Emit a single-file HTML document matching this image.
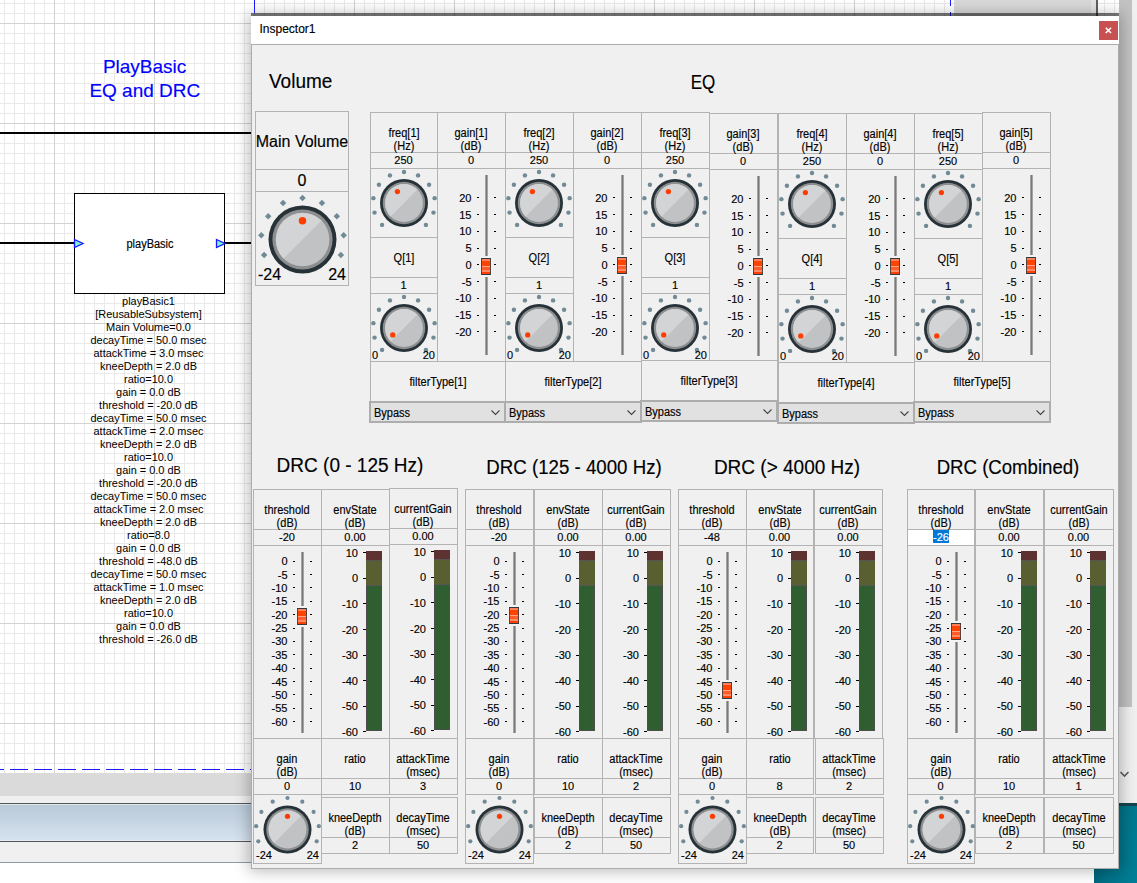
<!DOCTYPE html><html><head><meta charset="utf-8"><style>
html,body{margin:0;padding:0;width:1137px;height:883px;overflow:hidden;background:#fff;}
body{position:relative;font-family:"Liberation Sans", sans-serif;}
.a{position:absolute;}
.t{white-space:pre;-webkit-text-stroke:0.15px currentColor;}
</style></head><body>
<div class="a" style="left:0;top:0;width:1137px;height:773px;background:linear-gradient(to right,#d2d2d2 1px,transparent 1px) 54px 0/100px 100px,linear-gradient(to bottom,#d2d2d2 1px,transparent 1px) 0 23px/100px 100px,linear-gradient(to right,#e9e9e9 1px,transparent 1px) 4px 0/10px 10px,linear-gradient(to bottom,#e9e9e9 1px,transparent 1px) 0 3px/10px 10px,#fff;"></div>
<div class="a t" style="left:-5.40px;width:300px;text-align:center;top:52.42px;line-height:30px;font-size:19px;color:#0000ff;">PlayBasic</div>
<div class="a t" style="left:-5.20px;width:300px;text-align:center;top:75.72px;line-height:30px;font-size:19px;color:#0000ff;">EQ and DRC</div>
<div class="a" style="left:0px;top:132px;width:251px;height:2px;background:#000;"></div>
<div class="a" style="left:0px;top:242px;width:74px;height:2px;background:#000;"></div>
<div class="a" style="left:225px;top:242px;width:26px;height:2px;background:#000;"></div>
<div class="a" style="left:74px;top:193px;width:151px;height:101px;background:#fff;border:1px solid #000;box-sizing:border-box;"></div>
<div class="a t" style="left:49.50px;top:237.20px;width:200px;line-height:14px;font-size:12px;text-align:center;color:#000;transform:scaleX(0.917);transform-origin:50% 0;">playBasic</div>
<svg class="a" style="left:73px;top:237px" width="14" height="13"><path d="M1.5 2.5L10 6.5L1.5 10.5Z" fill="#7ff0d8" stroke="#1414ff" stroke-width="1.3"/></svg>
<svg class="a" style="left:215px;top:237px" width="14" height="13"><path d="M1.5 2.5L10 6.5L1.5 10.5Z" fill="#7ff0d8" stroke="#1414ff" stroke-width="1.3"/></svg>
<div class="a t" style="left:48.50px;top:294.40px;width:200px;line-height:14px;font-size:10.95px;text-align:center;color:#000;-webkit-text-stroke:0;">playBasic1</div>
<div class="a t" style="left:48.50px;top:307.40px;width:200px;line-height:14px;font-size:10.95px;text-align:center;color:#000;-webkit-text-stroke:0;">[ReusableSubsystem]</div>
<div class="a t" style="left:48.50px;top:320.40px;width:200px;line-height:14px;font-size:10.95px;text-align:center;color:#000;-webkit-text-stroke:0;">Main Volume=0.0</div>
<div class="a t" style="left:48.50px;top:333.40px;width:200px;line-height:14px;font-size:10.95px;text-align:center;color:#000;-webkit-text-stroke:0;">decayTime = 50.0 msec</div>
<div class="a t" style="left:48.50px;top:346.40px;width:200px;line-height:14px;font-size:10.95px;text-align:center;color:#000;-webkit-text-stroke:0;">attackTime = 3.0 msec</div>
<div class="a t" style="left:48.50px;top:359.40px;width:200px;line-height:14px;font-size:10.95px;text-align:center;color:#000;-webkit-text-stroke:0;">kneeDepth = 2.0 dB</div>
<div class="a t" style="left:48.50px;top:372.40px;width:200px;line-height:14px;font-size:10.95px;text-align:center;color:#000;-webkit-text-stroke:0;">ratio=10.0</div>
<div class="a t" style="left:48.50px;top:385.40px;width:200px;line-height:14px;font-size:10.95px;text-align:center;color:#000;-webkit-text-stroke:0;">gain = 0.0 dB</div>
<div class="a t" style="left:48.50px;top:398.40px;width:200px;line-height:14px;font-size:10.95px;text-align:center;color:#000;-webkit-text-stroke:0;">threshold = -20.0 dB</div>
<div class="a t" style="left:48.50px;top:411.40px;width:200px;line-height:14px;font-size:10.95px;text-align:center;color:#000;-webkit-text-stroke:0;">decayTime = 50.0 msec</div>
<div class="a t" style="left:48.50px;top:424.40px;width:200px;line-height:14px;font-size:10.95px;text-align:center;color:#000;-webkit-text-stroke:0;">attackTime = 2.0 msec</div>
<div class="a t" style="left:48.50px;top:437.40px;width:200px;line-height:14px;font-size:10.95px;text-align:center;color:#000;-webkit-text-stroke:0;">kneeDepth = 2.0 dB</div>
<div class="a t" style="left:48.50px;top:450.40px;width:200px;line-height:14px;font-size:10.95px;text-align:center;color:#000;-webkit-text-stroke:0;">ratio=10.0</div>
<div class="a t" style="left:48.50px;top:463.40px;width:200px;line-height:14px;font-size:10.95px;text-align:center;color:#000;-webkit-text-stroke:0;">gain = 0.0 dB</div>
<div class="a t" style="left:48.50px;top:476.40px;width:200px;line-height:14px;font-size:10.95px;text-align:center;color:#000;-webkit-text-stroke:0;">threshold = -20.0 dB</div>
<div class="a t" style="left:48.50px;top:489.40px;width:200px;line-height:14px;font-size:10.95px;text-align:center;color:#000;-webkit-text-stroke:0;">decayTime = 50.0 msec</div>
<div class="a t" style="left:48.50px;top:502.40px;width:200px;line-height:14px;font-size:10.95px;text-align:center;color:#000;-webkit-text-stroke:0;">attackTime = 2.0 msec</div>
<div class="a t" style="left:48.50px;top:515.40px;width:200px;line-height:14px;font-size:10.95px;text-align:center;color:#000;-webkit-text-stroke:0;">kneeDepth = 2.0 dB</div>
<div class="a t" style="left:48.50px;top:528.40px;width:200px;line-height:14px;font-size:10.95px;text-align:center;color:#000;-webkit-text-stroke:0;">ratio=8.0</div>
<div class="a t" style="left:48.50px;top:541.40px;width:200px;line-height:14px;font-size:10.95px;text-align:center;color:#000;-webkit-text-stroke:0;">gain = 0.0 dB</div>
<div class="a t" style="left:48.50px;top:554.40px;width:200px;line-height:14px;font-size:10.95px;text-align:center;color:#000;-webkit-text-stroke:0;">threshold = -48.0 dB</div>
<div class="a t" style="left:48.50px;top:567.40px;width:200px;line-height:14px;font-size:10.95px;text-align:center;color:#000;-webkit-text-stroke:0;">decayTime = 50.0 msec</div>
<div class="a t" style="left:48.50px;top:580.40px;width:200px;line-height:14px;font-size:10.95px;text-align:center;color:#000;-webkit-text-stroke:0;">attackTime = 1.0 msec</div>
<div class="a t" style="left:48.50px;top:593.40px;width:200px;line-height:14px;font-size:10.95px;text-align:center;color:#000;-webkit-text-stroke:0;">kneeDepth = 2.0 dB</div>
<div class="a t" style="left:48.50px;top:606.40px;width:200px;line-height:14px;font-size:10.95px;text-align:center;color:#000;-webkit-text-stroke:0;">ratio=10.0</div>
<div class="a t" style="left:48.50px;top:619.40px;width:200px;line-height:14px;font-size:10.95px;text-align:center;color:#000;-webkit-text-stroke:0;">gain = 0.0 dB</div>
<div class="a t" style="left:48.50px;top:632.40px;width:200px;line-height:14px;font-size:10.95px;text-align:center;color:#000;-webkit-text-stroke:0;">threshold = -26.0 dB</div>
<div class="a" style="left:0;top:769px;width:1137px;height:1px;background:repeating-linear-gradient(to right,transparent 0 10px,#1a1aff 10px 28px,transparent 28px 34px);background:linear-gradient(to right,#1a1aff 18px,transparent 18px) 10px 0/24px 1px;"></div>
<div class="a" style="left:0px;top:773px;width:1137px;height:23px;background:#dadada;"></div>
<div class="a" style="left:0px;top:796px;width:1137px;height:7px;background:#f0f0f0;"></div>
<div class="a" style="left:0px;top:803px;width:1137px;height:1px;background:#555;"></div>
<div class="a" style="left:0px;top:804px;width:1137px;height:1px;background:#dfe7ef;"></div>
<div class="a" style="left:0px;top:805px;width:1137px;height:35px;background:linear-gradient(#b9c9d8,#d6e2ef);"></div>
<div class="a" style="left:0px;top:840px;width:1137px;height:1px;background:#e4ebf3;"></div>
<div class="a" style="left:0px;top:841px;width:1137px;height:1px;background:#555;"></div>
<div class="a" style="left:0px;top:842px;width:1137px;height:20px;background:#f0f0f0;"></div>
<div class="a" style="left:0px;top:862px;width:1137px;height:1px;background:#8f99a3;"></div>
<div class="a" style="left:954px;top:0px;width:137px;height:16px;background:#d9d9d9;"></div>
<div class="a" style="left:1091px;top:0px;width:5px;height:16px;background:#e4e4e4;"></div>
<div class="a" style="left:1096px;top:0px;width:2px;height:16px;background:#606060;"></div>
<div class="a" style="left:254px;top:0px;width:1px;height:13px;background:#1a1aff;z-index:5;"></div>
<div class="a" style="left:950px;top:0;width:1px;height:16px;background:linear-gradient(#1a1aff 6px,transparent 6px) 0 0/1px 12px;"></div>
<div class="a" style="left:1119px;top:0px;width:18px;height:803px;background:#f0f0f0;"></div>
<div class="a" style="left:1119px;top:0px;width:13px;height:707px;background:#c2c2c2;"></div>
<svg class="a" style="left:1119px;top:770px" width="12" height="10"><path d="M1.5 2L5.5 6L9.5 2" fill="none" stroke="#5a5a5a" stroke-width="1.6"/></svg>
<div class="a" style="left:1094px;top:803px;width:43px;height:80px;background:linear-gradient(100deg,#005a6c,#007389 50%,#007f97);"></div>
<div class="a" style="left:1094px;top:803px;width:43px;height:3px;background:#17434e;"></div>
<div class="a" style="left:251px;top:16px;width:868px;height:853px;background:#f0f0f0;box-shadow:0 0 14px 2px rgba(0,0,0,0.28);"></div>
<div class="a" style="left:251px;top:13px;width:868px;height:3px;background:rgba(0,0,0,0.5);"></div>
<div class="a" style="left:251px;top:16px;width:868px;height:28px;background:#fff;"></div>
<div class="a" style="left:251px;top:44px;width:868px;height:1px;background:#acacac;"></div>
<div class="a" style="left:251px;top:45px;width:1px;height:824px;background:#acacac;"></div>
<div class="a" style="left:1118px;top:45px;width:1px;height:824px;background:#acacac;"></div>
<div class="a" style="left:251px;top:868px;width:868px;height:1px;background:#acacac;"></div>
<div class="a t" style="left:259.50px;top:22.00px;width:200px;line-height:14px;font-size:12px;text-align:left;color:#000;">Inspector1</div>
<div class="a" style="left:1099px;top:21px;width:19px;height:19px;background:#c75050;"></div>
<svg class="a" style="left:1099px;top:21px" width="19" height="19"><path d="M6.8 6.8L12 12M12 6.8L6.8 12" stroke="#fff" stroke-width="1.6"/></svg>
<div class="a t" style="left:269px;top:66.07px;line-height:30px;font-size:20px;transform:scaleX(0.95);transform-origin:0 0;">Volume</div>
<div class="a t" style="left:502.50px;width:400px;text-align:center;top:66.57px;line-height:30px;font-size:20px;transform:scaleX(0.85);transform-origin:50% 0;">EQ</div>
<div class="a" style="left:255px;top:111px;width:94px;height:59px;border:1px solid #b3b3b3;box-sizing:border-box;"></div>
<div class="a" style="left:255px;top:169px;width:94px;height:23px;border:1px solid #b3b3b3;box-sizing:border-box;"></div>
<div class="a" style="left:255px;top:191px;width:94px;height:95px;border:1px solid #b3b3b3;box-sizing:border-box;"></div>
<div class="a t" style="left:242.00px;top:134.60px;width:120px;line-height:14px;font-size:16px;text-align:center;color:#000;">Main Volume</div>
<div class="a t" style="left:272.00px;top:174.00px;width:60px;line-height:14px;font-size:16px;text-align:center;color:#000;">0</div>
<svg class="a" style="left:252.80px;top:189.80px" width="99" height="99" viewBox="0 0 99 99"><path d="M11.11 61.76L14.36 65.01L11.11 68.26L7.86 65.01Z" fill="#708a96"/><path d="M8.33 41.92L11.58 45.17L8.33 48.42L5.08 45.17Z" fill="#708a96"/><path d="M15.18 23.10L18.43 26.35L15.18 29.60L11.93 26.35Z" fill="#708a96"/><path d="M30.06 9.70L33.31 12.95L30.06 16.20L26.81 12.95Z" fill="#708a96"/><path d="M49.50 4.85L52.75 8.10L49.50 11.35L46.25 8.10Z" fill="#708a96"/><path d="M68.94 9.70L72.19 12.95L68.94 16.20L65.69 12.95Z" fill="#708a96"/><path d="M83.82 23.10L87.07 26.35L83.82 29.60L80.57 26.35Z" fill="#708a96"/><path d="M90.67 41.92L93.92 45.17L90.67 48.42L87.42 45.17Z" fill="#708a96"/><path d="M87.89 61.76L91.14 65.01L87.89 68.26L84.64 65.01Z" fill="#708a96"/><circle cx="49.5" cy="49.5" r="34" fill="#263238"/><circle cx="49.5" cy="49.5" r="30.09" fill="#8d8e8f"/><circle cx="49.5" cy="49.5" r="26.86" fill="#c1c2c3"/><path d="M30.51 68.49A26.86 26.86 0 0 1 68.49 30.51Z" fill="#d3d4d6"/><circle cx="49.50" cy="30.80" r="3.74" fill="#ff3c00"/></svg>
<div class="a t" style="left:258.00px;top:267.70px;width:60px;line-height:14px;font-size:16px;text-align:left;color:#000;">-24</div>
<div class="a t" style="left:286.00px;top:267.70px;width:60px;line-height:14px;font-size:16px;text-align:right;color:#000;">24</div>
<div class="a" style="left:370px;top:112px;width:68px;height:41px;border:1px solid #b3b3b3;box-sizing:border-box;"></div>
<div class="a" style="left:370px;top:152px;width:68px;height:17px;border:1px solid #b3b3b3;box-sizing:border-box;"></div>
<div class="a" style="left:370px;top:168px;width:68px;height:70px;border:1px solid #b3b3b3;box-sizing:border-box;"></div>
<div class="a t" style="left:303.50px;top:125.70px;width:200px;line-height:14px;font-size:12px;text-align:center;color:#000;transform:scaleX(0.917);transform-origin:50% 0;">freq[1]</div>
<div class="a t" style="left:303.50px;top:138.70px;width:200px;line-height:14px;font-size:12px;text-align:center;color:#000;transform:scaleX(0.917);transform-origin:50% 0;">(Hz)</div>
<div class="a t" style="left:303.50px;top:153.00px;width:200px;line-height:14px;font-size:11px;text-align:center;color:#000;">250</div>
<svg class="a" style="left:367.40px;top:166.20px" width="74" height="74" viewBox="0 0 74 74"><circle cx="15.08" cy="58.92" r="2.20" fill="#708a96"/><circle cx="7.52" cy="46.58" r="2.20" fill="#708a96"/><circle cx="6.38" cy="32.15" r="2.20" fill="#708a96"/><circle cx="11.92" cy="18.78" r="2.20" fill="#708a96"/><circle cx="22.93" cy="9.38" r="2.20" fill="#708a96"/><circle cx="37.00" cy="6.00" r="2.20" fill="#708a96"/><circle cx="51.07" cy="9.38" r="2.20" fill="#708a96"/><circle cx="62.08" cy="18.78" r="2.20" fill="#708a96"/><circle cx="67.62" cy="32.15" r="2.20" fill="#708a96"/><circle cx="66.48" cy="46.58" r="2.20" fill="#708a96"/><circle cx="58.92" cy="58.92" r="2.20" fill="#708a96"/><circle cx="37.0" cy="37.0" r="24" fill="#263238"/><circle cx="37.0" cy="37.0" r="21.24" fill="#8d8e8f"/><circle cx="37.0" cy="37.0" r="18.96" fill="#c1c2c3"/><path d="M23.59 50.41A18.96 18.96 0 0 1 50.41 23.59Z" fill="#d3d4d6"/><circle cx="30.40" cy="25.57" r="2.64" fill="#ff3c00"/></svg>
<div class="a" style="left:370px;top:237px;width:68px;height:41px;border:1px solid #b3b3b3;box-sizing:border-box;"></div>
<div class="a" style="left:370px;top:277px;width:68px;height:17px;border:1px solid #b3b3b3;box-sizing:border-box;"></div>
<div class="a" style="left:370px;top:293px;width:68px;height:69px;border:1px solid #b3b3b3;box-sizing:border-box;"></div>
<div class="a t" style="left:303.50px;top:250.70px;width:200px;line-height:14px;font-size:12px;text-align:center;color:#000;transform:scaleX(0.917);transform-origin:50% 0;">Q[1]</div>
<div class="a t" style="left:303.50px;top:278.00px;width:200px;line-height:14px;font-size:11px;text-align:center;color:#000;">1</div>
<svg class="a" style="left:367.20px;top:291.00px" width="74" height="74" viewBox="0 0 74 74"><circle cx="15.08" cy="58.92" r="2.20" fill="#708a96"/><circle cx="7.52" cy="46.58" r="2.20" fill="#708a96"/><circle cx="6.38" cy="32.15" r="2.20" fill="#708a96"/><circle cx="11.92" cy="18.78" r="2.20" fill="#708a96"/><circle cx="22.93" cy="9.38" r="2.20" fill="#708a96"/><circle cx="37.00" cy="6.00" r="2.20" fill="#708a96"/><circle cx="51.07" cy="9.38" r="2.20" fill="#708a96"/><circle cx="62.08" cy="18.78" r="2.20" fill="#708a96"/><circle cx="67.62" cy="32.15" r="2.20" fill="#708a96"/><circle cx="66.48" cy="46.58" r="2.20" fill="#708a96"/><circle cx="58.92" cy="58.92" r="2.20" fill="#708a96"/><circle cx="37.0" cy="37.0" r="24" fill="#263238"/><circle cx="37.0" cy="37.0" r="21.24" fill="#8d8e8f"/><circle cx="37.0" cy="37.0" r="18.96" fill="#c1c2c3"/><path d="M23.59 50.41A18.96 18.96 0 0 1 50.41 23.59Z" fill="#d3d4d6"/><circle cx="25.75" cy="43.90" r="2.64" fill="#ff3c00"/></svg>
<div class="a t" style="left:372.00px;top:348.00px;width:30px;line-height:14px;font-size:11px;text-align:left;color:#000;">0</div>
<div class="a t" style="left:405.00px;top:348.00px;width:30px;line-height:14px;font-size:11px;text-align:right;color:#000;">20</div>
<div class="a" style="left:437px;top:112px;width:69px;height:41px;border:1px solid #b3b3b3;box-sizing:border-box;"></div>
<div class="a" style="left:437px;top:152px;width:69px;height:17px;border:1px solid #b3b3b3;box-sizing:border-box;"></div>
<div class="a" style="left:437px;top:168px;width:69px;height:194px;border:1px solid #b3b3b3;box-sizing:border-box;"></div>
<div class="a t" style="left:371.00px;top:125.70px;width:200px;line-height:14px;font-size:12px;text-align:center;color:#000;transform:scaleX(0.917);transform-origin:50% 0;">gain[1]</div>
<div class="a t" style="left:371.00px;top:138.70px;width:200px;line-height:14px;font-size:12px;text-align:center;color:#000;transform:scaleX(0.917);transform-origin:50% 0;">(dB)</div>
<div class="a t" style="left:371.00px;top:153.00px;width:200px;line-height:14px;font-size:11px;text-align:center;color:#000;">0</div>
<div class="a" style="left:485px;top:175px;width:3px;height:180px;background:linear-gradient(to right,#b8b8b8,#7a7a7a 50%,#b8b8b8);"></div>
<div class="a t" style="left:431.50px;top:190.80px;width:40px;line-height:14px;font-size:11px;text-align:right;color:#000;">20</div>
<div class="a" style="left:477px;top:197px;width:2px;height:1px;background:#000;"></div>
<div class="a" style="left:494px;top:197px;width:2px;height:1px;background:#000;"></div>
<div class="a t" style="left:431.50px;top:207.56px;width:40px;line-height:14px;font-size:11px;text-align:right;color:#000;">15</div>
<div class="a" style="left:477px;top:214px;width:2px;height:1px;background:#000;"></div>
<div class="a" style="left:494px;top:214px;width:2px;height:1px;background:#000;"></div>
<div class="a t" style="left:431.50px;top:224.32px;width:40px;line-height:14px;font-size:11px;text-align:right;color:#000;">10</div>
<div class="a" style="left:477px;top:231px;width:2px;height:1px;background:#000;"></div>
<div class="a" style="left:494px;top:231px;width:2px;height:1px;background:#000;"></div>
<div class="a t" style="left:431.50px;top:241.08px;width:40px;line-height:14px;font-size:11px;text-align:right;color:#000;">5</div>
<div class="a" style="left:477px;top:248px;width:2px;height:1px;background:#000;"></div>
<div class="a" style="left:494px;top:248px;width:2px;height:1px;background:#000;"></div>
<div class="a t" style="left:431.50px;top:257.84px;width:40px;line-height:14px;font-size:11px;text-align:right;color:#000;">0</div>
<div class="a" style="left:477px;top:264px;width:2px;height:1px;background:#000;"></div>
<div class="a" style="left:494px;top:264px;width:2px;height:1px;background:#000;"></div>
<div class="a t" style="left:431.50px;top:274.60px;width:40px;line-height:14px;font-size:11px;text-align:right;color:#000;">-5</div>
<div class="a" style="left:477px;top:281px;width:2px;height:1px;background:#000;"></div>
<div class="a" style="left:494px;top:281px;width:2px;height:1px;background:#000;"></div>
<div class="a t" style="left:431.50px;top:291.36px;width:40px;line-height:14px;font-size:11px;text-align:right;color:#000;">-10</div>
<div class="a" style="left:477px;top:298px;width:2px;height:1px;background:#000;"></div>
<div class="a" style="left:494px;top:298px;width:2px;height:1px;background:#000;"></div>
<div class="a t" style="left:431.50px;top:308.12px;width:40px;line-height:14px;font-size:11px;text-align:right;color:#000;">-15</div>
<div class="a" style="left:477px;top:315px;width:2px;height:1px;background:#000;"></div>
<div class="a" style="left:494px;top:315px;width:2px;height:1px;background:#000;"></div>
<div class="a t" style="left:431.50px;top:324.88px;width:40px;line-height:14px;font-size:11px;text-align:right;color:#000;">-20</div>
<div class="a" style="left:477px;top:331px;width:2px;height:1px;background:#000;"></div>
<div class="a" style="left:494px;top:331px;width:2px;height:1px;background:#000;"></div>
<div class="a" style="left:480px;top:256px;width:12px;height:21px;background:#f3f3f3;"></div>
<svg class="a" style="left:481px;top:258px" width="10" height="17" viewBox="0 0 10 17"><rect x="0" y="0" width="10" height="17" fill="#5a4038"/><rect x="1" y="1" width="8" height="15" fill="#ff4500"/><rect x="1" y="1" width="8" height="2" fill="#ff7f58"/><rect x="1" y="3" width="8" height="5" fill="#ff4400"/><rect x="1" y="8" width="8" height="1" fill="#ffa48a"/><rect x="1" y="9" width="8" height="3" fill="#ff5c2a"/><rect x="1" y="12" width="8" height="2" fill="#ff8a66"/><rect x="1" y="14" width="8" height="2" fill="#ff4000"/><rect x="0" y="0" width="10" height="1" fill="#2f3b42"/><rect x="0" y="16" width="10" height="1" fill="#2f3b42"/></svg>
<div class="a" style="left:370px;top:361px;width:136px;height:41px;border:1px solid #b3b3b3;box-sizing:border-box;"></div>
<div class="a t" style="left:337.50px;top:374.70px;width:200px;line-height:14px;font-size:12px;text-align:center;color:#000;transform:scaleX(0.917);transform-origin:50% 0;">filterType[1]</div>
<div class="a" style="left:369px;top:401px;width:137px;height:22px;background:#e1e1e1;border:2px solid #adadad;box-sizing:border-box;"></div>
<div class="a t" style="left:374.00px;top:406.20px;width:80px;line-height:14px;font-size:12px;text-align:left;color:#000;transform:scaleX(0.917);transform-origin:0 0;">Bypass</div>
<svg class="a" style="left:490px;top:408px" width="12" height="9"><path d="M1.5 2.5L5.5 6.5L9.5 2.5" fill="none" stroke="#444" stroke-width="1.1"/></svg>
<div class="a" style="left:505px;top:112px;width:69px;height:41px;border:1px solid #b3b3b3;box-sizing:border-box;"></div>
<div class="a" style="left:505px;top:152px;width:69px;height:17px;border:1px solid #b3b3b3;box-sizing:border-box;"></div>
<div class="a" style="left:505px;top:168px;width:69px;height:70px;border:1px solid #b3b3b3;box-sizing:border-box;"></div>
<div class="a t" style="left:439.00px;top:125.70px;width:200px;line-height:14px;font-size:12px;text-align:center;color:#000;transform:scaleX(0.917);transform-origin:50% 0;">freq[2]</div>
<div class="a t" style="left:439.00px;top:138.70px;width:200px;line-height:14px;font-size:12px;text-align:center;color:#000;transform:scaleX(0.917);transform-origin:50% 0;">(Hz)</div>
<div class="a t" style="left:439.00px;top:153.00px;width:200px;line-height:14px;font-size:11px;text-align:center;color:#000;">250</div>
<svg class="a" style="left:502.40px;top:166.20px" width="74" height="74" viewBox="0 0 74 74"><circle cx="15.08" cy="58.92" r="2.20" fill="#708a96"/><circle cx="7.52" cy="46.58" r="2.20" fill="#708a96"/><circle cx="6.38" cy="32.15" r="2.20" fill="#708a96"/><circle cx="11.92" cy="18.78" r="2.20" fill="#708a96"/><circle cx="22.93" cy="9.38" r="2.20" fill="#708a96"/><circle cx="37.00" cy="6.00" r="2.20" fill="#708a96"/><circle cx="51.07" cy="9.38" r="2.20" fill="#708a96"/><circle cx="62.08" cy="18.78" r="2.20" fill="#708a96"/><circle cx="67.62" cy="32.15" r="2.20" fill="#708a96"/><circle cx="66.48" cy="46.58" r="2.20" fill="#708a96"/><circle cx="58.92" cy="58.92" r="2.20" fill="#708a96"/><circle cx="37.0" cy="37.0" r="24" fill="#263238"/><circle cx="37.0" cy="37.0" r="21.24" fill="#8d8e8f"/><circle cx="37.0" cy="37.0" r="18.96" fill="#c1c2c3"/><path d="M23.59 50.41A18.96 18.96 0 0 1 50.41 23.59Z" fill="#d3d4d6"/><circle cx="30.40" cy="25.57" r="2.64" fill="#ff3c00"/></svg>
<div class="a" style="left:505px;top:237px;width:69px;height:41px;border:1px solid #b3b3b3;box-sizing:border-box;"></div>
<div class="a" style="left:505px;top:277px;width:69px;height:17px;border:1px solid #b3b3b3;box-sizing:border-box;"></div>
<div class="a" style="left:505px;top:293px;width:69px;height:69px;border:1px solid #b3b3b3;box-sizing:border-box;"></div>
<div class="a t" style="left:439.00px;top:250.70px;width:200px;line-height:14px;font-size:12px;text-align:center;color:#000;transform:scaleX(0.917);transform-origin:50% 0;">Q[2]</div>
<div class="a t" style="left:439.00px;top:278.00px;width:200px;line-height:14px;font-size:11px;text-align:center;color:#000;">1</div>
<svg class="a" style="left:502.20px;top:291.00px" width="74" height="74" viewBox="0 0 74 74"><circle cx="15.08" cy="58.92" r="2.20" fill="#708a96"/><circle cx="7.52" cy="46.58" r="2.20" fill="#708a96"/><circle cx="6.38" cy="32.15" r="2.20" fill="#708a96"/><circle cx="11.92" cy="18.78" r="2.20" fill="#708a96"/><circle cx="22.93" cy="9.38" r="2.20" fill="#708a96"/><circle cx="37.00" cy="6.00" r="2.20" fill="#708a96"/><circle cx="51.07" cy="9.38" r="2.20" fill="#708a96"/><circle cx="62.08" cy="18.78" r="2.20" fill="#708a96"/><circle cx="67.62" cy="32.15" r="2.20" fill="#708a96"/><circle cx="66.48" cy="46.58" r="2.20" fill="#708a96"/><circle cx="58.92" cy="58.92" r="2.20" fill="#708a96"/><circle cx="37.0" cy="37.0" r="24" fill="#263238"/><circle cx="37.0" cy="37.0" r="21.24" fill="#8d8e8f"/><circle cx="37.0" cy="37.0" r="18.96" fill="#c1c2c3"/><path d="M23.59 50.41A18.96 18.96 0 0 1 50.41 23.59Z" fill="#d3d4d6"/><circle cx="25.75" cy="43.90" r="2.64" fill="#ff3c00"/></svg>
<div class="a t" style="left:507.00px;top:348.00px;width:30px;line-height:14px;font-size:11px;text-align:left;color:#000;">0</div>
<div class="a t" style="left:541.00px;top:348.00px;width:30px;line-height:14px;font-size:11px;text-align:right;color:#000;">20</div>
<div class="a" style="left:573px;top:112px;width:69px;height:41px;border:1px solid #b3b3b3;box-sizing:border-box;"></div>
<div class="a" style="left:573px;top:152px;width:69px;height:17px;border:1px solid #b3b3b3;box-sizing:border-box;"></div>
<div class="a" style="left:573px;top:168px;width:69px;height:194px;border:1px solid #b3b3b3;box-sizing:border-box;"></div>
<div class="a t" style="left:507.00px;top:125.70px;width:200px;line-height:14px;font-size:12px;text-align:center;color:#000;transform:scaleX(0.917);transform-origin:50% 0;">gain[2]</div>
<div class="a t" style="left:507.00px;top:138.70px;width:200px;line-height:14px;font-size:12px;text-align:center;color:#000;transform:scaleX(0.917);transform-origin:50% 0;">(dB)</div>
<div class="a t" style="left:507.00px;top:153.00px;width:200px;line-height:14px;font-size:11px;text-align:center;color:#000;">0</div>
<div class="a" style="left:621px;top:175px;width:3px;height:180px;background:linear-gradient(to right,#b8b8b8,#7a7a7a 50%,#b8b8b8);"></div>
<div class="a t" style="left:567.50px;top:190.80px;width:40px;line-height:14px;font-size:11px;text-align:right;color:#000;">20</div>
<div class="a" style="left:613px;top:197px;width:2px;height:1px;background:#000;"></div>
<div class="a" style="left:630px;top:197px;width:2px;height:1px;background:#000;"></div>
<div class="a t" style="left:567.50px;top:207.56px;width:40px;line-height:14px;font-size:11px;text-align:right;color:#000;">15</div>
<div class="a" style="left:613px;top:214px;width:2px;height:1px;background:#000;"></div>
<div class="a" style="left:630px;top:214px;width:2px;height:1px;background:#000;"></div>
<div class="a t" style="left:567.50px;top:224.32px;width:40px;line-height:14px;font-size:11px;text-align:right;color:#000;">10</div>
<div class="a" style="left:613px;top:231px;width:2px;height:1px;background:#000;"></div>
<div class="a" style="left:630px;top:231px;width:2px;height:1px;background:#000;"></div>
<div class="a t" style="left:567.50px;top:241.08px;width:40px;line-height:14px;font-size:11px;text-align:right;color:#000;">5</div>
<div class="a" style="left:613px;top:248px;width:2px;height:1px;background:#000;"></div>
<div class="a" style="left:630px;top:248px;width:2px;height:1px;background:#000;"></div>
<div class="a t" style="left:567.50px;top:257.84px;width:40px;line-height:14px;font-size:11px;text-align:right;color:#000;">0</div>
<div class="a" style="left:613px;top:264px;width:2px;height:1px;background:#000;"></div>
<div class="a" style="left:630px;top:264px;width:2px;height:1px;background:#000;"></div>
<div class="a t" style="left:567.50px;top:274.60px;width:40px;line-height:14px;font-size:11px;text-align:right;color:#000;">-5</div>
<div class="a" style="left:613px;top:281px;width:2px;height:1px;background:#000;"></div>
<div class="a" style="left:630px;top:281px;width:2px;height:1px;background:#000;"></div>
<div class="a t" style="left:567.50px;top:291.36px;width:40px;line-height:14px;font-size:11px;text-align:right;color:#000;">-10</div>
<div class="a" style="left:613px;top:298px;width:2px;height:1px;background:#000;"></div>
<div class="a" style="left:630px;top:298px;width:2px;height:1px;background:#000;"></div>
<div class="a t" style="left:567.50px;top:308.12px;width:40px;line-height:14px;font-size:11px;text-align:right;color:#000;">-15</div>
<div class="a" style="left:613px;top:315px;width:2px;height:1px;background:#000;"></div>
<div class="a" style="left:630px;top:315px;width:2px;height:1px;background:#000;"></div>
<div class="a t" style="left:567.50px;top:324.88px;width:40px;line-height:14px;font-size:11px;text-align:right;color:#000;">-20</div>
<div class="a" style="left:613px;top:331px;width:2px;height:1px;background:#000;"></div>
<div class="a" style="left:630px;top:331px;width:2px;height:1px;background:#000;"></div>
<div class="a" style="left:616px;top:255px;width:12px;height:21px;background:#f3f3f3;"></div>
<svg class="a" style="left:617px;top:257px" width="10" height="17" viewBox="0 0 10 17"><rect x="0" y="0" width="10" height="17" fill="#5a4038"/><rect x="1" y="1" width="8" height="15" fill="#ff4500"/><rect x="1" y="1" width="8" height="2" fill="#ff7f58"/><rect x="1" y="3" width="8" height="5" fill="#ff4400"/><rect x="1" y="8" width="8" height="1" fill="#ffa48a"/><rect x="1" y="9" width="8" height="3" fill="#ff5c2a"/><rect x="1" y="12" width="8" height="2" fill="#ff8a66"/><rect x="1" y="14" width="8" height="2" fill="#ff4000"/><rect x="0" y="0" width="10" height="1" fill="#2f3b42"/><rect x="0" y="16" width="10" height="1" fill="#2f3b42"/></svg>
<div class="a" style="left:505px;top:361px;width:137px;height:41px;border:1px solid #b3b3b3;box-sizing:border-box;"></div>
<div class="a t" style="left:473.00px;top:374.70px;width:200px;line-height:14px;font-size:12px;text-align:center;color:#000;transform:scaleX(0.917);transform-origin:50% 0;">filterType[2]</div>
<div class="a" style="left:504px;top:401px;width:138px;height:22px;background:#e1e1e1;border:2px solid #adadad;box-sizing:border-box;"></div>
<div class="a t" style="left:509.00px;top:406.20px;width:80px;line-height:14px;font-size:12px;text-align:left;color:#000;transform:scaleX(0.917);transform-origin:0 0;">Bypass</div>
<svg class="a" style="left:626px;top:408px" width="12" height="9"><path d="M1.5 2.5L5.5 6.5L9.5 2.5" fill="none" stroke="#444" stroke-width="1.1"/></svg>
<div class="a" style="left:641px;top:112px;width:69px;height:41px;border:1px solid #b3b3b3;box-sizing:border-box;"></div>
<div class="a" style="left:641px;top:152px;width:69px;height:17px;border:1px solid #b3b3b3;box-sizing:border-box;"></div>
<div class="a" style="left:641px;top:168px;width:69px;height:70px;border:1px solid #b3b3b3;box-sizing:border-box;"></div>
<div class="a t" style="left:575.00px;top:125.70px;width:200px;line-height:14px;font-size:12px;text-align:center;color:#000;transform:scaleX(0.917);transform-origin:50% 0;">freq[3]</div>
<div class="a t" style="left:575.00px;top:138.70px;width:200px;line-height:14px;font-size:12px;text-align:center;color:#000;transform:scaleX(0.917);transform-origin:50% 0;">(Hz)</div>
<div class="a t" style="left:575.00px;top:153.00px;width:200px;line-height:14px;font-size:11px;text-align:center;color:#000;">250</div>
<svg class="a" style="left:638.40px;top:166.20px" width="74" height="74" viewBox="0 0 74 74"><circle cx="15.08" cy="58.92" r="2.20" fill="#708a96"/><circle cx="7.52" cy="46.58" r="2.20" fill="#708a96"/><circle cx="6.38" cy="32.15" r="2.20" fill="#708a96"/><circle cx="11.92" cy="18.78" r="2.20" fill="#708a96"/><circle cx="22.93" cy="9.38" r="2.20" fill="#708a96"/><circle cx="37.00" cy="6.00" r="2.20" fill="#708a96"/><circle cx="51.07" cy="9.38" r="2.20" fill="#708a96"/><circle cx="62.08" cy="18.78" r="2.20" fill="#708a96"/><circle cx="67.62" cy="32.15" r="2.20" fill="#708a96"/><circle cx="66.48" cy="46.58" r="2.20" fill="#708a96"/><circle cx="58.92" cy="58.92" r="2.20" fill="#708a96"/><circle cx="37.0" cy="37.0" r="24" fill="#263238"/><circle cx="37.0" cy="37.0" r="21.24" fill="#8d8e8f"/><circle cx="37.0" cy="37.0" r="18.96" fill="#c1c2c3"/><path d="M23.59 50.41A18.96 18.96 0 0 1 50.41 23.59Z" fill="#d3d4d6"/><circle cx="30.40" cy="25.57" r="2.64" fill="#ff3c00"/></svg>
<div class="a" style="left:641px;top:237px;width:69px;height:41px;border:1px solid #b3b3b3;box-sizing:border-box;"></div>
<div class="a" style="left:641px;top:277px;width:69px;height:17px;border:1px solid #b3b3b3;box-sizing:border-box;"></div>
<div class="a" style="left:641px;top:293px;width:69px;height:68px;border:1px solid #b3b3b3;box-sizing:border-box;"></div>
<div class="a t" style="left:575.00px;top:250.70px;width:200px;line-height:14px;font-size:12px;text-align:center;color:#000;transform:scaleX(0.917);transform-origin:50% 0;">Q[3]</div>
<div class="a t" style="left:575.00px;top:278.00px;width:200px;line-height:14px;font-size:11px;text-align:center;color:#000;">1</div>
<svg class="a" style="left:638.20px;top:291.00px" width="74" height="74" viewBox="0 0 74 74"><circle cx="15.08" cy="58.92" r="2.20" fill="#708a96"/><circle cx="7.52" cy="46.58" r="2.20" fill="#708a96"/><circle cx="6.38" cy="32.15" r="2.20" fill="#708a96"/><circle cx="11.92" cy="18.78" r="2.20" fill="#708a96"/><circle cx="22.93" cy="9.38" r="2.20" fill="#708a96"/><circle cx="37.00" cy="6.00" r="2.20" fill="#708a96"/><circle cx="51.07" cy="9.38" r="2.20" fill="#708a96"/><circle cx="62.08" cy="18.78" r="2.20" fill="#708a96"/><circle cx="67.62" cy="32.15" r="2.20" fill="#708a96"/><circle cx="66.48" cy="46.58" r="2.20" fill="#708a96"/><circle cx="58.92" cy="58.92" r="2.20" fill="#708a96"/><circle cx="37.0" cy="37.0" r="24" fill="#263238"/><circle cx="37.0" cy="37.0" r="21.24" fill="#8d8e8f"/><circle cx="37.0" cy="37.0" r="18.96" fill="#c1c2c3"/><path d="M23.59 50.41A18.96 18.96 0 0 1 50.41 23.59Z" fill="#d3d4d6"/><circle cx="25.75" cy="43.90" r="2.64" fill="#ff3c00"/></svg>
<div class="a t" style="left:643.00px;top:348.00px;width:30px;line-height:14px;font-size:11px;text-align:left;color:#000;">0</div>
<div class="a t" style="left:677.00px;top:348.00px;width:30px;line-height:14px;font-size:11px;text-align:right;color:#000;">20</div>
<div class="a" style="left:709px;top:113px;width:69px;height:41px;border:1px solid #b3b3b3;box-sizing:border-box;"></div>
<div class="a" style="left:709px;top:153px;width:69px;height:17px;border:1px solid #b3b3b3;box-sizing:border-box;"></div>
<div class="a" style="left:709px;top:169px;width:69px;height:192px;border:1px solid #b3b3b3;box-sizing:border-box;"></div>
<div class="a t" style="left:643.00px;top:126.70px;width:200px;line-height:14px;font-size:12px;text-align:center;color:#000;transform:scaleX(0.917);transform-origin:50% 0;">gain[3]</div>
<div class="a t" style="left:643.00px;top:139.70px;width:200px;line-height:14px;font-size:12px;text-align:center;color:#000;transform:scaleX(0.917);transform-origin:50% 0;">(dB)</div>
<div class="a t" style="left:643.00px;top:154.00px;width:200px;line-height:14px;font-size:11px;text-align:center;color:#000;">0</div>
<div class="a" style="left:757px;top:176px;width:3px;height:180px;background:linear-gradient(to right,#b8b8b8,#7a7a7a 50%,#b8b8b8);"></div>
<div class="a t" style="left:703.50px;top:191.80px;width:40px;line-height:14px;font-size:11px;text-align:right;color:#000;">20</div>
<div class="a" style="left:749px;top:198px;width:2px;height:1px;background:#000;"></div>
<div class="a" style="left:766px;top:198px;width:2px;height:1px;background:#000;"></div>
<div class="a t" style="left:703.50px;top:208.56px;width:40px;line-height:14px;font-size:11px;text-align:right;color:#000;">15</div>
<div class="a" style="left:749px;top:215px;width:2px;height:1px;background:#000;"></div>
<div class="a" style="left:766px;top:215px;width:2px;height:1px;background:#000;"></div>
<div class="a t" style="left:703.50px;top:225.32px;width:40px;line-height:14px;font-size:11px;text-align:right;color:#000;">10</div>
<div class="a" style="left:749px;top:232px;width:2px;height:1px;background:#000;"></div>
<div class="a" style="left:766px;top:232px;width:2px;height:1px;background:#000;"></div>
<div class="a t" style="left:703.50px;top:242.08px;width:40px;line-height:14px;font-size:11px;text-align:right;color:#000;">5</div>
<div class="a" style="left:749px;top:249px;width:2px;height:1px;background:#000;"></div>
<div class="a" style="left:766px;top:249px;width:2px;height:1px;background:#000;"></div>
<div class="a t" style="left:703.50px;top:258.84px;width:40px;line-height:14px;font-size:11px;text-align:right;color:#000;">0</div>
<div class="a" style="left:749px;top:265px;width:2px;height:1px;background:#000;"></div>
<div class="a" style="left:766px;top:265px;width:2px;height:1px;background:#000;"></div>
<div class="a t" style="left:703.50px;top:275.60px;width:40px;line-height:14px;font-size:11px;text-align:right;color:#000;">-5</div>
<div class="a" style="left:749px;top:282px;width:2px;height:1px;background:#000;"></div>
<div class="a" style="left:766px;top:282px;width:2px;height:1px;background:#000;"></div>
<div class="a t" style="left:703.50px;top:292.36px;width:40px;line-height:14px;font-size:11px;text-align:right;color:#000;">-10</div>
<div class="a" style="left:749px;top:299px;width:2px;height:1px;background:#000;"></div>
<div class="a" style="left:766px;top:299px;width:2px;height:1px;background:#000;"></div>
<div class="a t" style="left:703.50px;top:309.12px;width:40px;line-height:14px;font-size:11px;text-align:right;color:#000;">-15</div>
<div class="a" style="left:749px;top:316px;width:2px;height:1px;background:#000;"></div>
<div class="a" style="left:766px;top:316px;width:2px;height:1px;background:#000;"></div>
<div class="a t" style="left:703.50px;top:325.88px;width:40px;line-height:14px;font-size:11px;text-align:right;color:#000;">-20</div>
<div class="a" style="left:749px;top:332px;width:2px;height:1px;background:#000;"></div>
<div class="a" style="left:766px;top:332px;width:2px;height:1px;background:#000;"></div>
<div class="a" style="left:752px;top:256px;width:12px;height:21px;background:#f3f3f3;"></div>
<svg class="a" style="left:753px;top:258px" width="10" height="17" viewBox="0 0 10 17"><rect x="0" y="0" width="10" height="17" fill="#5a4038"/><rect x="1" y="1" width="8" height="15" fill="#ff4500"/><rect x="1" y="1" width="8" height="2" fill="#ff7f58"/><rect x="1" y="3" width="8" height="5" fill="#ff4400"/><rect x="1" y="8" width="8" height="1" fill="#ffa48a"/><rect x="1" y="9" width="8" height="3" fill="#ff5c2a"/><rect x="1" y="12" width="8" height="2" fill="#ff8a66"/><rect x="1" y="14" width="8" height="2" fill="#ff4000"/><rect x="0" y="0" width="10" height="1" fill="#2f3b42"/><rect x="0" y="16" width="10" height="1" fill="#2f3b42"/></svg>
<div class="a" style="left:641px;top:360px;width:137px;height:41px;border:1px solid #b3b3b3;box-sizing:border-box;"></div>
<div class="a t" style="left:609.00px;top:373.70px;width:200px;line-height:14px;font-size:12px;text-align:center;color:#000;transform:scaleX(0.917);transform-origin:50% 0;">filterType[3]</div>
<div class="a" style="left:640px;top:400px;width:138px;height:22px;background:#e1e1e1;border:2px solid #adadad;box-sizing:border-box;"></div>
<div class="a t" style="left:645.00px;top:405.20px;width:80px;line-height:14px;font-size:12px;text-align:left;color:#000;transform:scaleX(0.917);transform-origin:0 0;">Bypass</div>
<svg class="a" style="left:762px;top:407px" width="12" height="9"><path d="M1.5 2.5L5.5 6.5L9.5 2.5" fill="none" stroke="#444" stroke-width="1.1"/></svg>
<div class="a" style="left:778px;top:113px;width:69px;height:41px;border:1px solid #b3b3b3;box-sizing:border-box;"></div>
<div class="a" style="left:778px;top:153px;width:69px;height:17px;border:1px solid #b3b3b3;box-sizing:border-box;"></div>
<div class="a" style="left:778px;top:169px;width:69px;height:70px;border:1px solid #b3b3b3;box-sizing:border-box;"></div>
<div class="a t" style="left:712.00px;top:126.70px;width:200px;line-height:14px;font-size:12px;text-align:center;color:#000;transform:scaleX(0.917);transform-origin:50% 0;">freq[4]</div>
<div class="a t" style="left:712.00px;top:139.70px;width:200px;line-height:14px;font-size:12px;text-align:center;color:#000;transform:scaleX(0.917);transform-origin:50% 0;">(Hz)</div>
<div class="a t" style="left:712.00px;top:154.00px;width:200px;line-height:14px;font-size:11px;text-align:center;color:#000;">250</div>
<svg class="a" style="left:775.40px;top:167.20px" width="74" height="74" viewBox="0 0 74 74"><circle cx="15.08" cy="58.92" r="2.20" fill="#708a96"/><circle cx="7.52" cy="46.58" r="2.20" fill="#708a96"/><circle cx="6.38" cy="32.15" r="2.20" fill="#708a96"/><circle cx="11.92" cy="18.78" r="2.20" fill="#708a96"/><circle cx="22.93" cy="9.38" r="2.20" fill="#708a96"/><circle cx="37.00" cy="6.00" r="2.20" fill="#708a96"/><circle cx="51.07" cy="9.38" r="2.20" fill="#708a96"/><circle cx="62.08" cy="18.78" r="2.20" fill="#708a96"/><circle cx="67.62" cy="32.15" r="2.20" fill="#708a96"/><circle cx="66.48" cy="46.58" r="2.20" fill="#708a96"/><circle cx="58.92" cy="58.92" r="2.20" fill="#708a96"/><circle cx="37.0" cy="37.0" r="24" fill="#263238"/><circle cx="37.0" cy="37.0" r="21.24" fill="#8d8e8f"/><circle cx="37.0" cy="37.0" r="18.96" fill="#c1c2c3"/><path d="M23.59 50.41A18.96 18.96 0 0 1 50.41 23.59Z" fill="#d3d4d6"/><circle cx="30.40" cy="25.57" r="2.64" fill="#ff3c00"/></svg>
<div class="a" style="left:778px;top:238px;width:69px;height:41px;border:1px solid #b3b3b3;box-sizing:border-box;"></div>
<div class="a" style="left:778px;top:278px;width:69px;height:17px;border:1px solid #b3b3b3;box-sizing:border-box;"></div>
<div class="a" style="left:778px;top:294px;width:69px;height:69px;border:1px solid #b3b3b3;box-sizing:border-box;"></div>
<div class="a t" style="left:712.00px;top:251.70px;width:200px;line-height:14px;font-size:12px;text-align:center;color:#000;transform:scaleX(0.917);transform-origin:50% 0;">Q[4]</div>
<div class="a t" style="left:712.00px;top:279.00px;width:200px;line-height:14px;font-size:11px;text-align:center;color:#000;">1</div>
<svg class="a" style="left:775.20px;top:292.00px" width="74" height="74" viewBox="0 0 74 74"><circle cx="15.08" cy="58.92" r="2.20" fill="#708a96"/><circle cx="7.52" cy="46.58" r="2.20" fill="#708a96"/><circle cx="6.38" cy="32.15" r="2.20" fill="#708a96"/><circle cx="11.92" cy="18.78" r="2.20" fill="#708a96"/><circle cx="22.93" cy="9.38" r="2.20" fill="#708a96"/><circle cx="37.00" cy="6.00" r="2.20" fill="#708a96"/><circle cx="51.07" cy="9.38" r="2.20" fill="#708a96"/><circle cx="62.08" cy="18.78" r="2.20" fill="#708a96"/><circle cx="67.62" cy="32.15" r="2.20" fill="#708a96"/><circle cx="66.48" cy="46.58" r="2.20" fill="#708a96"/><circle cx="58.92" cy="58.92" r="2.20" fill="#708a96"/><circle cx="37.0" cy="37.0" r="24" fill="#263238"/><circle cx="37.0" cy="37.0" r="21.24" fill="#8d8e8f"/><circle cx="37.0" cy="37.0" r="18.96" fill="#c1c2c3"/><path d="M23.59 50.41A18.96 18.96 0 0 1 50.41 23.59Z" fill="#d3d4d6"/><circle cx="25.75" cy="43.90" r="2.64" fill="#ff3c00"/></svg>
<div class="a t" style="left:780.00px;top:349.00px;width:30px;line-height:14px;font-size:11px;text-align:left;color:#000;">0</div>
<div class="a t" style="left:814.00px;top:349.00px;width:30px;line-height:14px;font-size:11px;text-align:right;color:#000;">20</div>
<div class="a" style="left:846px;top:113px;width:69px;height:41px;border:1px solid #b3b3b3;box-sizing:border-box;"></div>
<div class="a" style="left:846px;top:153px;width:69px;height:17px;border:1px solid #b3b3b3;box-sizing:border-box;"></div>
<div class="a" style="left:846px;top:169px;width:69px;height:194px;border:1px solid #b3b3b3;box-sizing:border-box;"></div>
<div class="a t" style="left:780.00px;top:126.70px;width:200px;line-height:14px;font-size:12px;text-align:center;color:#000;transform:scaleX(0.917);transform-origin:50% 0;">gain[4]</div>
<div class="a t" style="left:780.00px;top:139.70px;width:200px;line-height:14px;font-size:12px;text-align:center;color:#000;transform:scaleX(0.917);transform-origin:50% 0;">(dB)</div>
<div class="a t" style="left:780.00px;top:154.00px;width:200px;line-height:14px;font-size:11px;text-align:center;color:#000;">0</div>
<div class="a" style="left:894px;top:176px;width:3px;height:180px;background:linear-gradient(to right,#b8b8b8,#7a7a7a 50%,#b8b8b8);"></div>
<div class="a t" style="left:840.50px;top:191.80px;width:40px;line-height:14px;font-size:11px;text-align:right;color:#000;">20</div>
<div class="a" style="left:886px;top:198px;width:2px;height:1px;background:#000;"></div>
<div class="a" style="left:903px;top:198px;width:2px;height:1px;background:#000;"></div>
<div class="a t" style="left:840.50px;top:208.56px;width:40px;line-height:14px;font-size:11px;text-align:right;color:#000;">15</div>
<div class="a" style="left:886px;top:215px;width:2px;height:1px;background:#000;"></div>
<div class="a" style="left:903px;top:215px;width:2px;height:1px;background:#000;"></div>
<div class="a t" style="left:840.50px;top:225.32px;width:40px;line-height:14px;font-size:11px;text-align:right;color:#000;">10</div>
<div class="a" style="left:886px;top:232px;width:2px;height:1px;background:#000;"></div>
<div class="a" style="left:903px;top:232px;width:2px;height:1px;background:#000;"></div>
<div class="a t" style="left:840.50px;top:242.08px;width:40px;line-height:14px;font-size:11px;text-align:right;color:#000;">5</div>
<div class="a" style="left:886px;top:249px;width:2px;height:1px;background:#000;"></div>
<div class="a" style="left:903px;top:249px;width:2px;height:1px;background:#000;"></div>
<div class="a t" style="left:840.50px;top:258.84px;width:40px;line-height:14px;font-size:11px;text-align:right;color:#000;">0</div>
<div class="a" style="left:886px;top:265px;width:2px;height:1px;background:#000;"></div>
<div class="a" style="left:903px;top:265px;width:2px;height:1px;background:#000;"></div>
<div class="a t" style="left:840.50px;top:275.60px;width:40px;line-height:14px;font-size:11px;text-align:right;color:#000;">-5</div>
<div class="a" style="left:886px;top:282px;width:2px;height:1px;background:#000;"></div>
<div class="a" style="left:903px;top:282px;width:2px;height:1px;background:#000;"></div>
<div class="a t" style="left:840.50px;top:292.36px;width:40px;line-height:14px;font-size:11px;text-align:right;color:#000;">-10</div>
<div class="a" style="left:886px;top:299px;width:2px;height:1px;background:#000;"></div>
<div class="a" style="left:903px;top:299px;width:2px;height:1px;background:#000;"></div>
<div class="a t" style="left:840.50px;top:309.12px;width:40px;line-height:14px;font-size:11px;text-align:right;color:#000;">-15</div>
<div class="a" style="left:886px;top:316px;width:2px;height:1px;background:#000;"></div>
<div class="a" style="left:903px;top:316px;width:2px;height:1px;background:#000;"></div>
<div class="a t" style="left:840.50px;top:325.88px;width:40px;line-height:14px;font-size:11px;text-align:right;color:#000;">-20</div>
<div class="a" style="left:886px;top:332px;width:2px;height:1px;background:#000;"></div>
<div class="a" style="left:903px;top:332px;width:2px;height:1px;background:#000;"></div>
<div class="a" style="left:889px;top:256px;width:12px;height:21px;background:#f3f3f3;"></div>
<svg class="a" style="left:890px;top:258px" width="10" height="17" viewBox="0 0 10 17"><rect x="0" y="0" width="10" height="17" fill="#5a4038"/><rect x="1" y="1" width="8" height="15" fill="#ff4500"/><rect x="1" y="1" width="8" height="2" fill="#ff7f58"/><rect x="1" y="3" width="8" height="5" fill="#ff4400"/><rect x="1" y="8" width="8" height="1" fill="#ffa48a"/><rect x="1" y="9" width="8" height="3" fill="#ff5c2a"/><rect x="1" y="12" width="8" height="2" fill="#ff8a66"/><rect x="1" y="14" width="8" height="2" fill="#ff4000"/><rect x="0" y="0" width="10" height="1" fill="#2f3b42"/><rect x="0" y="16" width="10" height="1" fill="#2f3b42"/></svg>
<div class="a" style="left:778px;top:362px;width:137px;height:41px;border:1px solid #b3b3b3;box-sizing:border-box;"></div>
<div class="a t" style="left:746.00px;top:375.70px;width:200px;line-height:14px;font-size:12px;text-align:center;color:#000;transform:scaleX(0.917);transform-origin:50% 0;">filterType[4]</div>
<div class="a" style="left:777px;top:402px;width:138px;height:22px;background:#e1e1e1;border:2px solid #adadad;box-sizing:border-box;"></div>
<div class="a t" style="left:782.00px;top:407.20px;width:80px;line-height:14px;font-size:12px;text-align:left;color:#000;transform:scaleX(0.917);transform-origin:0 0;">Bypass</div>
<svg class="a" style="left:899px;top:409px" width="12" height="9"><path d="M1.5 2.5L5.5 6.5L9.5 2.5" fill="none" stroke="#444" stroke-width="1.1"/></svg>
<div class="a" style="left:914px;top:113px;width:69px;height:41px;border:1px solid #b3b3b3;box-sizing:border-box;"></div>
<div class="a" style="left:914px;top:153px;width:69px;height:17px;border:1px solid #b3b3b3;box-sizing:border-box;"></div>
<div class="a" style="left:914px;top:169px;width:69px;height:70px;border:1px solid #b3b3b3;box-sizing:border-box;"></div>
<div class="a t" style="left:848.00px;top:126.70px;width:200px;line-height:14px;font-size:12px;text-align:center;color:#000;transform:scaleX(0.917);transform-origin:50% 0;">freq[5]</div>
<div class="a t" style="left:848.00px;top:139.70px;width:200px;line-height:14px;font-size:12px;text-align:center;color:#000;transform:scaleX(0.917);transform-origin:50% 0;">(Hz)</div>
<div class="a t" style="left:848.00px;top:154.00px;width:200px;line-height:14px;font-size:11px;text-align:center;color:#000;">250</div>
<svg class="a" style="left:911.40px;top:167.20px" width="74" height="74" viewBox="0 0 74 74"><circle cx="15.08" cy="58.92" r="2.20" fill="#708a96"/><circle cx="7.52" cy="46.58" r="2.20" fill="#708a96"/><circle cx="6.38" cy="32.15" r="2.20" fill="#708a96"/><circle cx="11.92" cy="18.78" r="2.20" fill="#708a96"/><circle cx="22.93" cy="9.38" r="2.20" fill="#708a96"/><circle cx="37.00" cy="6.00" r="2.20" fill="#708a96"/><circle cx="51.07" cy="9.38" r="2.20" fill="#708a96"/><circle cx="62.08" cy="18.78" r="2.20" fill="#708a96"/><circle cx="67.62" cy="32.15" r="2.20" fill="#708a96"/><circle cx="66.48" cy="46.58" r="2.20" fill="#708a96"/><circle cx="58.92" cy="58.92" r="2.20" fill="#708a96"/><circle cx="37.0" cy="37.0" r="24" fill="#263238"/><circle cx="37.0" cy="37.0" r="21.24" fill="#8d8e8f"/><circle cx="37.0" cy="37.0" r="18.96" fill="#c1c2c3"/><path d="M23.59 50.41A18.96 18.96 0 0 1 50.41 23.59Z" fill="#d3d4d6"/><circle cx="30.40" cy="25.57" r="2.64" fill="#ff3c00"/></svg>
<div class="a" style="left:914px;top:238px;width:69px;height:41px;border:1px solid #b3b3b3;box-sizing:border-box;"></div>
<div class="a" style="left:914px;top:278px;width:69px;height:17px;border:1px solid #b3b3b3;box-sizing:border-box;"></div>
<div class="a" style="left:914px;top:294px;width:69px;height:68px;border:1px solid #b3b3b3;box-sizing:border-box;"></div>
<div class="a t" style="left:848.00px;top:251.70px;width:200px;line-height:14px;font-size:12px;text-align:center;color:#000;transform:scaleX(0.917);transform-origin:50% 0;">Q[5]</div>
<div class="a t" style="left:848.00px;top:279.00px;width:200px;line-height:14px;font-size:11px;text-align:center;color:#000;">1</div>
<svg class="a" style="left:911.20px;top:292.00px" width="74" height="74" viewBox="0 0 74 74"><circle cx="15.08" cy="58.92" r="2.20" fill="#708a96"/><circle cx="7.52" cy="46.58" r="2.20" fill="#708a96"/><circle cx="6.38" cy="32.15" r="2.20" fill="#708a96"/><circle cx="11.92" cy="18.78" r="2.20" fill="#708a96"/><circle cx="22.93" cy="9.38" r="2.20" fill="#708a96"/><circle cx="37.00" cy="6.00" r="2.20" fill="#708a96"/><circle cx="51.07" cy="9.38" r="2.20" fill="#708a96"/><circle cx="62.08" cy="18.78" r="2.20" fill="#708a96"/><circle cx="67.62" cy="32.15" r="2.20" fill="#708a96"/><circle cx="66.48" cy="46.58" r="2.20" fill="#708a96"/><circle cx="58.92" cy="58.92" r="2.20" fill="#708a96"/><circle cx="37.0" cy="37.0" r="24" fill="#263238"/><circle cx="37.0" cy="37.0" r="21.24" fill="#8d8e8f"/><circle cx="37.0" cy="37.0" r="18.96" fill="#c1c2c3"/><path d="M23.59 50.41A18.96 18.96 0 0 1 50.41 23.59Z" fill="#d3d4d6"/><circle cx="25.75" cy="43.90" r="2.64" fill="#ff3c00"/></svg>
<div class="a t" style="left:916.00px;top:349.00px;width:30px;line-height:14px;font-size:11px;text-align:left;color:#000;">0</div>
<div class="a t" style="left:950.00px;top:349.00px;width:30px;line-height:14px;font-size:11px;text-align:right;color:#000;">20</div>
<div class="a" style="left:982px;top:112px;width:69px;height:41px;border:1px solid #b3b3b3;box-sizing:border-box;"></div>
<div class="a" style="left:982px;top:152px;width:69px;height:17px;border:1px solid #b3b3b3;box-sizing:border-box;"></div>
<div class="a" style="left:982px;top:168px;width:69px;height:194px;border:1px solid #b3b3b3;box-sizing:border-box;"></div>
<div class="a t" style="left:916.00px;top:125.70px;width:200px;line-height:14px;font-size:12px;text-align:center;color:#000;transform:scaleX(0.917);transform-origin:50% 0;">gain[5]</div>
<div class="a t" style="left:916.00px;top:138.70px;width:200px;line-height:14px;font-size:12px;text-align:center;color:#000;transform:scaleX(0.917);transform-origin:50% 0;">(dB)</div>
<div class="a t" style="left:916.00px;top:153.00px;width:200px;line-height:14px;font-size:11px;text-align:center;color:#000;">0</div>
<div class="a" style="left:1030px;top:175px;width:3px;height:180px;background:linear-gradient(to right,#b8b8b8,#7a7a7a 50%,#b8b8b8);"></div>
<div class="a t" style="left:976.50px;top:190.80px;width:40px;line-height:14px;font-size:11px;text-align:right;color:#000;">20</div>
<div class="a" style="left:1022px;top:197px;width:2px;height:1px;background:#000;"></div>
<div class="a" style="left:1039px;top:197px;width:2px;height:1px;background:#000;"></div>
<div class="a t" style="left:976.50px;top:207.56px;width:40px;line-height:14px;font-size:11px;text-align:right;color:#000;">15</div>
<div class="a" style="left:1022px;top:214px;width:2px;height:1px;background:#000;"></div>
<div class="a" style="left:1039px;top:214px;width:2px;height:1px;background:#000;"></div>
<div class="a t" style="left:976.50px;top:224.32px;width:40px;line-height:14px;font-size:11px;text-align:right;color:#000;">10</div>
<div class="a" style="left:1022px;top:231px;width:2px;height:1px;background:#000;"></div>
<div class="a" style="left:1039px;top:231px;width:2px;height:1px;background:#000;"></div>
<div class="a t" style="left:976.50px;top:241.08px;width:40px;line-height:14px;font-size:11px;text-align:right;color:#000;">5</div>
<div class="a" style="left:1022px;top:248px;width:2px;height:1px;background:#000;"></div>
<div class="a" style="left:1039px;top:248px;width:2px;height:1px;background:#000;"></div>
<div class="a t" style="left:976.50px;top:257.84px;width:40px;line-height:14px;font-size:11px;text-align:right;color:#000;">0</div>
<div class="a" style="left:1022px;top:264px;width:2px;height:1px;background:#000;"></div>
<div class="a" style="left:1039px;top:264px;width:2px;height:1px;background:#000;"></div>
<div class="a t" style="left:976.50px;top:274.60px;width:40px;line-height:14px;font-size:11px;text-align:right;color:#000;">-5</div>
<div class="a" style="left:1022px;top:281px;width:2px;height:1px;background:#000;"></div>
<div class="a" style="left:1039px;top:281px;width:2px;height:1px;background:#000;"></div>
<div class="a t" style="left:976.50px;top:291.36px;width:40px;line-height:14px;font-size:11px;text-align:right;color:#000;">-10</div>
<div class="a" style="left:1022px;top:298px;width:2px;height:1px;background:#000;"></div>
<div class="a" style="left:1039px;top:298px;width:2px;height:1px;background:#000;"></div>
<div class="a t" style="left:976.50px;top:308.12px;width:40px;line-height:14px;font-size:11px;text-align:right;color:#000;">-15</div>
<div class="a" style="left:1022px;top:315px;width:2px;height:1px;background:#000;"></div>
<div class="a" style="left:1039px;top:315px;width:2px;height:1px;background:#000;"></div>
<div class="a t" style="left:976.50px;top:324.88px;width:40px;line-height:14px;font-size:11px;text-align:right;color:#000;">-20</div>
<div class="a" style="left:1022px;top:331px;width:2px;height:1px;background:#000;"></div>
<div class="a" style="left:1039px;top:331px;width:2px;height:1px;background:#000;"></div>
<div class="a" style="left:1025px;top:255px;width:12px;height:21px;background:#f3f3f3;"></div>
<svg class="a" style="left:1026px;top:257px" width="10" height="17" viewBox="0 0 10 17"><rect x="0" y="0" width="10" height="17" fill="#5a4038"/><rect x="1" y="1" width="8" height="15" fill="#ff4500"/><rect x="1" y="1" width="8" height="2" fill="#ff7f58"/><rect x="1" y="3" width="8" height="5" fill="#ff4400"/><rect x="1" y="8" width="8" height="1" fill="#ffa48a"/><rect x="1" y="9" width="8" height="3" fill="#ff5c2a"/><rect x="1" y="12" width="8" height="2" fill="#ff8a66"/><rect x="1" y="14" width="8" height="2" fill="#ff4000"/><rect x="0" y="0" width="10" height="1" fill="#2f3b42"/><rect x="0" y="16" width="10" height="1" fill="#2f3b42"/></svg>
<div class="a" style="left:914px;top:361px;width:137px;height:41px;border:1px solid #b3b3b3;box-sizing:border-box;"></div>
<div class="a t" style="left:882.00px;top:374.70px;width:200px;line-height:14px;font-size:12px;text-align:center;color:#000;transform:scaleX(0.917);transform-origin:50% 0;">filterType[5]</div>
<div class="a" style="left:913px;top:401px;width:138px;height:22px;background:#e1e1e1;border:2px solid #adadad;box-sizing:border-box;"></div>
<div class="a t" style="left:918.00px;top:406.20px;width:80px;line-height:14px;font-size:12px;text-align:left;color:#000;transform:scaleX(0.917);transform-origin:0 0;">Bypass</div>
<svg class="a" style="left:1035px;top:408px" width="12" height="9"><path d="M1.5 2.5L5.5 6.5L9.5 2.5" fill="none" stroke="#444" stroke-width="1.1"/></svg>
<div class="a t" style="left:150.00px;width:400px;text-align:center;top:450.07px;line-height:30px;font-size:20px;transform:scaleX(0.95);transform-origin:50% 0;">DRC (0 - 125 Hz)</div>
<div class="a" style="left:253px;top:489px;width:69px;height:41px;border:1px solid #b3b3b3;box-sizing:border-box;"></div>
<div class="a" style="left:253px;top:529px;width:69px;height:17px;border:1px solid #b3b3b3;box-sizing:border-box;"></div>
<div class="a" style="left:253px;top:545px;width:69px;height:194px;border:1px solid #b3b3b3;box-sizing:border-box;"></div>
<div class="a t" style="left:187.00px;top:502.70px;width:200px;line-height:14px;font-size:12px;text-align:center;color:#000;transform:scaleX(0.917);transform-origin:50% 0;">threshold</div>
<div class="a t" style="left:187.00px;top:515.70px;width:200px;line-height:14px;font-size:12px;text-align:center;color:#000;transform:scaleX(0.917);transform-origin:50% 0;">(dB)</div>
<div class="a t" style="left:187.00px;top:530.00px;width:200px;line-height:14px;font-size:11px;text-align:center;color:#000;">-20</div>
<div class="a" style="left:301px;top:552px;width:3px;height:180.5px;background:linear-gradient(to right,#b8b8b8,#7a7a7a 50%,#b8b8b8);"></div>
<div class="a t" style="left:247.50px;top:554.20px;width:40px;line-height:14px;font-size:11px;text-align:right;color:#000;">0</div>
<div class="a" style="left:293px;top:561px;width:2px;height:1px;background:#000;"></div>
<div class="a" style="left:310px;top:561px;width:2px;height:1px;background:#000;"></div>
<div class="a t" style="left:247.50px;top:567.58px;width:40px;line-height:14px;font-size:11px;text-align:right;color:#000;">-5</div>
<div class="a" style="left:293px;top:574px;width:2px;height:1px;background:#000;"></div>
<div class="a" style="left:310px;top:574px;width:2px;height:1px;background:#000;"></div>
<div class="a t" style="left:247.50px;top:580.95px;width:40px;line-height:14px;font-size:11px;text-align:right;color:#000;">-10</div>
<div class="a" style="left:293px;top:587px;width:2px;height:1px;background:#000;"></div>
<div class="a" style="left:310px;top:587px;width:2px;height:1px;background:#000;"></div>
<div class="a t" style="left:247.50px;top:594.33px;width:40px;line-height:14px;font-size:11px;text-align:right;color:#000;">-15</div>
<div class="a" style="left:293px;top:601px;width:2px;height:1px;background:#000;"></div>
<div class="a" style="left:310px;top:601px;width:2px;height:1px;background:#000;"></div>
<div class="a t" style="left:247.50px;top:607.70px;width:40px;line-height:14px;font-size:11px;text-align:right;color:#000;">-20</div>
<div class="a" style="left:293px;top:614px;width:2px;height:1px;background:#000;"></div>
<div class="a" style="left:310px;top:614px;width:2px;height:1px;background:#000;"></div>
<div class="a t" style="left:247.50px;top:621.08px;width:40px;line-height:14px;font-size:11px;text-align:right;color:#000;">-25</div>
<div class="a" style="left:293px;top:628px;width:2px;height:1px;background:#000;"></div>
<div class="a" style="left:310px;top:628px;width:2px;height:1px;background:#000;"></div>
<div class="a t" style="left:247.50px;top:634.45px;width:40px;line-height:14px;font-size:11px;text-align:right;color:#000;">-30</div>
<div class="a" style="left:293px;top:641px;width:2px;height:1px;background:#000;"></div>
<div class="a" style="left:310px;top:641px;width:2px;height:1px;background:#000;"></div>
<div class="a t" style="left:247.50px;top:647.83px;width:40px;line-height:14px;font-size:11px;text-align:right;color:#000;">-35</div>
<div class="a" style="left:293px;top:654px;width:2px;height:1px;background:#000;"></div>
<div class="a" style="left:310px;top:654px;width:2px;height:1px;background:#000;"></div>
<div class="a t" style="left:247.50px;top:661.20px;width:40px;line-height:14px;font-size:11px;text-align:right;color:#000;">-40</div>
<div class="a" style="left:293px;top:668px;width:2px;height:1px;background:#000;"></div>
<div class="a" style="left:310px;top:668px;width:2px;height:1px;background:#000;"></div>
<div class="a t" style="left:247.50px;top:674.58px;width:40px;line-height:14px;font-size:11px;text-align:right;color:#000;">-45</div>
<div class="a" style="left:293px;top:681px;width:2px;height:1px;background:#000;"></div>
<div class="a" style="left:310px;top:681px;width:2px;height:1px;background:#000;"></div>
<div class="a t" style="left:247.50px;top:687.95px;width:40px;line-height:14px;font-size:11px;text-align:right;color:#000;">-50</div>
<div class="a" style="left:293px;top:694px;width:2px;height:1px;background:#000;"></div>
<div class="a" style="left:310px;top:694px;width:2px;height:1px;background:#000;"></div>
<div class="a t" style="left:247.50px;top:701.33px;width:40px;line-height:14px;font-size:11px;text-align:right;color:#000;">-55</div>
<div class="a" style="left:293px;top:708px;width:2px;height:1px;background:#000;"></div>
<div class="a" style="left:310px;top:708px;width:2px;height:1px;background:#000;"></div>
<div class="a t" style="left:247.50px;top:714.70px;width:40px;line-height:14px;font-size:11px;text-align:right;color:#000;">-60</div>
<div class="a" style="left:293px;top:721px;width:2px;height:1px;background:#000;"></div>
<div class="a" style="left:310px;top:721px;width:2px;height:1px;background:#000;"></div>
<div class="a" style="left:296px;top:606px;width:12px;height:21px;background:#f3f3f3;"></div>
<svg class="a" style="left:297px;top:608px" width="10" height="17" viewBox="0 0 10 17"><rect x="0" y="0" width="10" height="17" fill="#5a4038"/><rect x="1" y="1" width="8" height="15" fill="#ff4500"/><rect x="1" y="1" width="8" height="2" fill="#ff7f58"/><rect x="1" y="3" width="8" height="5" fill="#ff4400"/><rect x="1" y="8" width="8" height="1" fill="#ffa48a"/><rect x="1" y="9" width="8" height="3" fill="#ff5c2a"/><rect x="1" y="12" width="8" height="2" fill="#ff8a66"/><rect x="1" y="14" width="8" height="2" fill="#ff4000"/><rect x="0" y="0" width="10" height="1" fill="#2f3b42"/><rect x="0" y="16" width="10" height="1" fill="#2f3b42"/></svg>
<div class="a" style="left:321px;top:489px;width:69px;height:41px;border:1px solid #b3b3b3;box-sizing:border-box;"></div>
<div class="a" style="left:321px;top:529px;width:69px;height:17px;border:1px solid #b3b3b3;box-sizing:border-box;"></div>
<div class="a" style="left:321px;top:545px;width:69px;height:194px;border:1px solid #b3b3b3;box-sizing:border-box;"></div>
<div class="a t" style="left:255.00px;top:502.70px;width:200px;line-height:14px;font-size:12px;text-align:center;color:#000;transform:scaleX(0.917);transform-origin:50% 0;">envState</div>
<div class="a t" style="left:255.00px;top:515.70px;width:200px;line-height:14px;font-size:12px;text-align:center;color:#000;transform:scaleX(0.917);transform-origin:50% 0;">(dB)</div>
<div class="a t" style="left:255.00px;top:530.00px;width:200px;line-height:14px;font-size:11px;text-align:center;color:#000;">0.00</div>
<div class="a" style="left:366px;top:551px;width:16px;height:180px;background:#2f5e30;border:1px solid #4d4d4d;box-sizing:border-box;"></div>
<div class="a" style="left:366px;top:551px;width:16px;height:10px;background:#5e3231;border-bottom:1px solid #555;box-sizing:border-box;"></div>
<div class="a" style="left:366px;top:561px;width:16px;height:25px;background:#5a5f32;border-bottom:1px solid #555;box-sizing:border-box;"></div>
<div class="a t" style="left:318.00px;top:545.70px;width:40px;line-height:14px;font-size:11px;text-align:right;color:#000;">10</div>
<div class="a" style="left:363px;top:552px;width:3px;height:1px;background:#000;"></div>
<div class="a t" style="left:318.00px;top:571.30px;width:40px;line-height:14px;font-size:11px;text-align:right;color:#000;">0</div>
<div class="a" style="left:363px;top:578px;width:3px;height:1px;background:#000;"></div>
<div class="a t" style="left:318.00px;top:596.90px;width:40px;line-height:14px;font-size:11px;text-align:right;color:#000;">-10</div>
<div class="a" style="left:363px;top:603px;width:3px;height:1px;background:#000;"></div>
<div class="a t" style="left:318.00px;top:622.50px;width:40px;line-height:14px;font-size:11px;text-align:right;color:#000;">-20</div>
<div class="a" style="left:363px;top:629px;width:3px;height:1px;background:#000;"></div>
<div class="a t" style="left:318.00px;top:648.10px;width:40px;line-height:14px;font-size:11px;text-align:right;color:#000;">-30</div>
<div class="a" style="left:363px;top:655px;width:3px;height:1px;background:#000;"></div>
<div class="a t" style="left:318.00px;top:673.70px;width:40px;line-height:14px;font-size:11px;text-align:right;color:#000;">-40</div>
<div class="a" style="left:363px;top:680px;width:3px;height:1px;background:#000;"></div>
<div class="a t" style="left:318.00px;top:699.30px;width:40px;line-height:14px;font-size:11px;text-align:right;color:#000;">-50</div>
<div class="a" style="left:363px;top:706px;width:3px;height:1px;background:#000;"></div>
<div class="a t" style="left:318.00px;top:724.90px;width:40px;line-height:14px;font-size:11px;text-align:right;color:#000;">-60</div>
<div class="a" style="left:363px;top:731px;width:3px;height:1px;background:#000;"></div>
<div class="a" style="left:389px;top:488px;width:69px;height:41px;border:1px solid #b3b3b3;box-sizing:border-box;"></div>
<div class="a" style="left:389px;top:528px;width:69px;height:17px;border:1px solid #b3b3b3;box-sizing:border-box;"></div>
<div class="a" style="left:389px;top:544px;width:69px;height:195px;border:1px solid #b3b3b3;box-sizing:border-box;"></div>
<div class="a t" style="left:323.00px;top:501.70px;width:200px;line-height:14px;font-size:12px;text-align:center;color:#000;transform:scaleX(0.917);transform-origin:50% 0;">currentGain</div>
<div class="a t" style="left:323.00px;top:514.70px;width:200px;line-height:14px;font-size:12px;text-align:center;color:#000;transform:scaleX(0.917);transform-origin:50% 0;">(dB)</div>
<div class="a t" style="left:323.00px;top:529.00px;width:200px;line-height:14px;font-size:11px;text-align:center;color:#000;">0.00</div>
<div class="a" style="left:434px;top:550px;width:16px;height:180px;background:#2f5e30;border:1px solid #4d4d4d;box-sizing:border-box;"></div>
<div class="a" style="left:434px;top:550px;width:16px;height:10px;background:#5e3231;border-bottom:1px solid #555;box-sizing:border-box;"></div>
<div class="a" style="left:434px;top:560px;width:16px;height:25px;background:#5a5f32;border-bottom:1px solid #555;box-sizing:border-box;"></div>
<div class="a t" style="left:386.00px;top:544.70px;width:40px;line-height:14px;font-size:11px;text-align:right;color:#000;">10</div>
<div class="a" style="left:431px;top:551px;width:3px;height:1px;background:#000;"></div>
<div class="a t" style="left:386.00px;top:570.30px;width:40px;line-height:14px;font-size:11px;text-align:right;color:#000;">0</div>
<div class="a" style="left:431px;top:577px;width:3px;height:1px;background:#000;"></div>
<div class="a t" style="left:386.00px;top:595.90px;width:40px;line-height:14px;font-size:11px;text-align:right;color:#000;">-10</div>
<div class="a" style="left:431px;top:602px;width:3px;height:1px;background:#000;"></div>
<div class="a t" style="left:386.00px;top:621.50px;width:40px;line-height:14px;font-size:11px;text-align:right;color:#000;">-20</div>
<div class="a" style="left:431px;top:628px;width:3px;height:1px;background:#000;"></div>
<div class="a t" style="left:386.00px;top:647.10px;width:40px;line-height:14px;font-size:11px;text-align:right;color:#000;">-30</div>
<div class="a" style="left:431px;top:654px;width:3px;height:1px;background:#000;"></div>
<div class="a t" style="left:386.00px;top:672.70px;width:40px;line-height:14px;font-size:11px;text-align:right;color:#000;">-40</div>
<div class="a" style="left:431px;top:679px;width:3px;height:1px;background:#000;"></div>
<div class="a t" style="left:386.00px;top:698.30px;width:40px;line-height:14px;font-size:11px;text-align:right;color:#000;">-50</div>
<div class="a" style="left:431px;top:705px;width:3px;height:1px;background:#000;"></div>
<div class="a t" style="left:386.00px;top:723.90px;width:40px;line-height:14px;font-size:11px;text-align:right;color:#000;">-60</div>
<div class="a" style="left:431px;top:730px;width:3px;height:1px;background:#000;"></div>
<div class="a" style="left:253px;top:738px;width:69px;height:41px;border:1px solid #b3b3b3;box-sizing:border-box;"></div>
<div class="a" style="left:253px;top:778px;width:69px;height:17px;border:1px solid #b3b3b3;box-sizing:border-box;"></div>
<div class="a" style="left:253px;top:794px;width:69px;height:70px;border:1px solid #b3b3b3;box-sizing:border-box;"></div>
<div class="a t" style="left:187.00px;top:751.70px;width:200px;line-height:14px;font-size:12px;text-align:center;color:#000;transform:scaleX(0.917);transform-origin:50% 0;">gain</div>
<div class="a t" style="left:187.00px;top:764.70px;width:200px;line-height:14px;font-size:12px;text-align:center;color:#000;transform:scaleX(0.917);transform-origin:50% 0;">(dB)</div>
<div class="a t" style="left:187.00px;top:779.00px;width:200px;line-height:14px;font-size:11px;text-align:center;color:#000;">0</div>
<svg class="a" style="left:250.00px;top:792.20px" width="75" height="75" viewBox="0 0 75 75"><circle cx="8.29" cy="49.30" r="2.10" fill="#708a96"/><circle cx="6.17" cy="34.21" r="2.10" fill="#708a96"/><circle cx="11.39" cy="19.89" r="2.10" fill="#708a96"/><circle cx="22.71" cy="9.69" r="2.10" fill="#708a96"/><circle cx="37.50" cy="6.00" r="2.10" fill="#708a96"/><circle cx="52.29" cy="9.69" r="2.10" fill="#708a96"/><circle cx="63.61" cy="19.89" r="2.10" fill="#708a96"/><circle cx="68.83" cy="34.21" r="2.10" fill="#708a96"/><circle cx="66.71" cy="49.30" r="2.10" fill="#708a96"/><circle cx="37.5" cy="37.5" r="24" fill="#263238"/><circle cx="37.5" cy="37.5" r="21.24" fill="#8d8e8f"/><circle cx="37.5" cy="37.5" r="18.96" fill="#c1c2c3"/><path d="M24.09 50.91A18.96 18.96 0 0 1 50.91 24.09Z" fill="#d3d4d6"/><circle cx="37.50" cy="24.30" r="2.64" fill="#ff3c00"/></svg>
<div class="a t" style="left:256.00px;top:847.50px;width:30px;line-height:14px;font-size:11px;text-align:left;color:#000;">-24</div>
<div class="a t" style="left:289.00px;top:847.50px;width:30px;line-height:14px;font-size:11px;text-align:right;color:#000;">24</div>
<div class="a" style="left:321px;top:738px;width:69px;height:41px;border:1px solid #b3b3b3;box-sizing:border-box;"></div>
<div class="a" style="left:321px;top:778px;width:69px;height:17px;border:1px solid #b3b3b3;box-sizing:border-box;"></div>
<div class="a t" style="left:255.00px;top:751.70px;width:200px;line-height:14px;font-size:12px;text-align:center;color:#000;transform:scaleX(0.917);transform-origin:50% 0;">ratio</div>
<div class="a t" style="left:255.00px;top:779.00px;width:200px;line-height:14px;font-size:11px;text-align:center;color:#000;">10</div>
<div class="a" style="left:389px;top:738px;width:69px;height:41px;border:1px solid #b3b3b3;box-sizing:border-box;"></div>
<div class="a" style="left:389px;top:778px;width:69px;height:17px;border:1px solid #b3b3b3;box-sizing:border-box;"></div>
<div class="a t" style="left:323.00px;top:751.70px;width:200px;line-height:14px;font-size:12px;text-align:center;color:#000;transform:scaleX(0.917);transform-origin:50% 0;">attackTime</div>
<div class="a t" style="left:323.00px;top:764.70px;width:200px;line-height:14px;font-size:12px;text-align:center;color:#000;transform:scaleX(0.917);transform-origin:50% 0;">(msec)</div>
<div class="a t" style="left:323.00px;top:779.00px;width:200px;line-height:14px;font-size:11px;text-align:center;color:#000;">3</div>
<div class="a" style="left:321px;top:797px;width:69px;height:41px;border:1px solid #b3b3b3;box-sizing:border-box;"></div>
<div class="a" style="left:321px;top:837px;width:69px;height:17px;border:1px solid #b3b3b3;box-sizing:border-box;"></div>
<div class="a t" style="left:255.00px;top:810.70px;width:200px;line-height:14px;font-size:12px;text-align:center;color:#000;transform:scaleX(0.917);transform-origin:50% 0;">kneeDepth</div>
<div class="a t" style="left:255.00px;top:823.70px;width:200px;line-height:14px;font-size:12px;text-align:center;color:#000;transform:scaleX(0.917);transform-origin:50% 0;">(dB)</div>
<div class="a t" style="left:255.00px;top:838.00px;width:200px;line-height:14px;font-size:11px;text-align:center;color:#000;">2</div>
<div class="a" style="left:389px;top:797px;width:69px;height:41px;border:1px solid #b3b3b3;box-sizing:border-box;"></div>
<div class="a" style="left:389px;top:837px;width:69px;height:17px;border:1px solid #b3b3b3;box-sizing:border-box;"></div>
<div class="a t" style="left:323.00px;top:810.70px;width:200px;line-height:14px;font-size:12px;text-align:center;color:#000;transform:scaleX(0.917);transform-origin:50% 0;">decayTime</div>
<div class="a t" style="left:323.00px;top:823.70px;width:200px;line-height:14px;font-size:12px;text-align:center;color:#000;transform:scaleX(0.917);transform-origin:50% 0;">(msec)</div>
<div class="a t" style="left:323.00px;top:838.00px;width:200px;line-height:14px;font-size:11px;text-align:center;color:#000;">50</div>
<div class="a t" style="left:374.00px;width:400px;text-align:center;top:452.07px;line-height:30px;font-size:20px;transform:scaleX(0.934);transform-origin:50% 0;">DRC (125 - 4000 Hz)</div>
<div class="a" style="left:465px;top:489px;width:69px;height:41px;border:1px solid #b3b3b3;box-sizing:border-box;"></div>
<div class="a" style="left:465px;top:529px;width:69px;height:17px;border:1px solid #b3b3b3;box-sizing:border-box;"></div>
<div class="a" style="left:465px;top:545px;width:69px;height:194px;border:1px solid #b3b3b3;box-sizing:border-box;"></div>
<div class="a t" style="left:399.00px;top:502.70px;width:200px;line-height:14px;font-size:12px;text-align:center;color:#000;transform:scaleX(0.917);transform-origin:50% 0;">threshold</div>
<div class="a t" style="left:399.00px;top:515.70px;width:200px;line-height:14px;font-size:12px;text-align:center;color:#000;transform:scaleX(0.917);transform-origin:50% 0;">(dB)</div>
<div class="a t" style="left:399.00px;top:530.00px;width:200px;line-height:14px;font-size:11px;text-align:center;color:#000;">-20</div>
<div class="a" style="left:513px;top:552px;width:3px;height:180.5px;background:linear-gradient(to right,#b8b8b8,#7a7a7a 50%,#b8b8b8);"></div>
<div class="a t" style="left:459.50px;top:554.20px;width:40px;line-height:14px;font-size:11px;text-align:right;color:#000;">0</div>
<div class="a" style="left:505px;top:561px;width:2px;height:1px;background:#000;"></div>
<div class="a" style="left:522px;top:561px;width:2px;height:1px;background:#000;"></div>
<div class="a t" style="left:459.50px;top:567.58px;width:40px;line-height:14px;font-size:11px;text-align:right;color:#000;">-5</div>
<div class="a" style="left:505px;top:574px;width:2px;height:1px;background:#000;"></div>
<div class="a" style="left:522px;top:574px;width:2px;height:1px;background:#000;"></div>
<div class="a t" style="left:459.50px;top:580.95px;width:40px;line-height:14px;font-size:11px;text-align:right;color:#000;">-10</div>
<div class="a" style="left:505px;top:587px;width:2px;height:1px;background:#000;"></div>
<div class="a" style="left:522px;top:587px;width:2px;height:1px;background:#000;"></div>
<div class="a t" style="left:459.50px;top:594.33px;width:40px;line-height:14px;font-size:11px;text-align:right;color:#000;">-15</div>
<div class="a" style="left:505px;top:601px;width:2px;height:1px;background:#000;"></div>
<div class="a" style="left:522px;top:601px;width:2px;height:1px;background:#000;"></div>
<div class="a t" style="left:459.50px;top:607.70px;width:40px;line-height:14px;font-size:11px;text-align:right;color:#000;">-20</div>
<div class="a" style="left:505px;top:614px;width:2px;height:1px;background:#000;"></div>
<div class="a" style="left:522px;top:614px;width:2px;height:1px;background:#000;"></div>
<div class="a t" style="left:459.50px;top:621.08px;width:40px;line-height:14px;font-size:11px;text-align:right;color:#000;">-25</div>
<div class="a" style="left:505px;top:628px;width:2px;height:1px;background:#000;"></div>
<div class="a" style="left:522px;top:628px;width:2px;height:1px;background:#000;"></div>
<div class="a t" style="left:459.50px;top:634.45px;width:40px;line-height:14px;font-size:11px;text-align:right;color:#000;">-30</div>
<div class="a" style="left:505px;top:641px;width:2px;height:1px;background:#000;"></div>
<div class="a" style="left:522px;top:641px;width:2px;height:1px;background:#000;"></div>
<div class="a t" style="left:459.50px;top:647.83px;width:40px;line-height:14px;font-size:11px;text-align:right;color:#000;">-35</div>
<div class="a" style="left:505px;top:654px;width:2px;height:1px;background:#000;"></div>
<div class="a" style="left:522px;top:654px;width:2px;height:1px;background:#000;"></div>
<div class="a t" style="left:459.50px;top:661.20px;width:40px;line-height:14px;font-size:11px;text-align:right;color:#000;">-40</div>
<div class="a" style="left:505px;top:668px;width:2px;height:1px;background:#000;"></div>
<div class="a" style="left:522px;top:668px;width:2px;height:1px;background:#000;"></div>
<div class="a t" style="left:459.50px;top:674.58px;width:40px;line-height:14px;font-size:11px;text-align:right;color:#000;">-45</div>
<div class="a" style="left:505px;top:681px;width:2px;height:1px;background:#000;"></div>
<div class="a" style="left:522px;top:681px;width:2px;height:1px;background:#000;"></div>
<div class="a t" style="left:459.50px;top:687.95px;width:40px;line-height:14px;font-size:11px;text-align:right;color:#000;">-50</div>
<div class="a" style="left:505px;top:694px;width:2px;height:1px;background:#000;"></div>
<div class="a" style="left:522px;top:694px;width:2px;height:1px;background:#000;"></div>
<div class="a t" style="left:459.50px;top:701.33px;width:40px;line-height:14px;font-size:11px;text-align:right;color:#000;">-55</div>
<div class="a" style="left:505px;top:708px;width:2px;height:1px;background:#000;"></div>
<div class="a" style="left:522px;top:708px;width:2px;height:1px;background:#000;"></div>
<div class="a t" style="left:459.50px;top:714.70px;width:40px;line-height:14px;font-size:11px;text-align:right;color:#000;">-60</div>
<div class="a" style="left:505px;top:721px;width:2px;height:1px;background:#000;"></div>
<div class="a" style="left:522px;top:721px;width:2px;height:1px;background:#000;"></div>
<div class="a" style="left:508px;top:605px;width:12px;height:21px;background:#f3f3f3;"></div>
<svg class="a" style="left:509px;top:607px" width="10" height="17" viewBox="0 0 10 17"><rect x="0" y="0" width="10" height="17" fill="#5a4038"/><rect x="1" y="1" width="8" height="15" fill="#ff4500"/><rect x="1" y="1" width="8" height="2" fill="#ff7f58"/><rect x="1" y="3" width="8" height="5" fill="#ff4400"/><rect x="1" y="8" width="8" height="1" fill="#ffa48a"/><rect x="1" y="9" width="8" height="3" fill="#ff5c2a"/><rect x="1" y="12" width="8" height="2" fill="#ff8a66"/><rect x="1" y="14" width="8" height="2" fill="#ff4000"/><rect x="0" y="0" width="10" height="1" fill="#2f3b42"/><rect x="0" y="16" width="10" height="1" fill="#2f3b42"/></svg>
<div class="a" style="left:534px;top:489px;width:69px;height:41px;border:1px solid #b3b3b3;box-sizing:border-box;"></div>
<div class="a" style="left:534px;top:529px;width:69px;height:17px;border:1px solid #b3b3b3;box-sizing:border-box;"></div>
<div class="a" style="left:534px;top:545px;width:69px;height:194px;border:1px solid #b3b3b3;box-sizing:border-box;"></div>
<div class="a t" style="left:468.00px;top:502.70px;width:200px;line-height:14px;font-size:12px;text-align:center;color:#000;transform:scaleX(0.917);transform-origin:50% 0;">envState</div>
<div class="a t" style="left:468.00px;top:515.70px;width:200px;line-height:14px;font-size:12px;text-align:center;color:#000;transform:scaleX(0.917);transform-origin:50% 0;">(dB)</div>
<div class="a t" style="left:468.00px;top:530.00px;width:200px;line-height:14px;font-size:11px;text-align:center;color:#000;">0.00</div>
<div class="a" style="left:579px;top:551px;width:16px;height:180px;background:#2f5e30;border:1px solid #4d4d4d;box-sizing:border-box;"></div>
<div class="a" style="left:579px;top:551px;width:16px;height:10px;background:#5e3231;border-bottom:1px solid #555;box-sizing:border-box;"></div>
<div class="a" style="left:579px;top:561px;width:16px;height:25px;background:#5a5f32;border-bottom:1px solid #555;box-sizing:border-box;"></div>
<div class="a t" style="left:531.00px;top:545.70px;width:40px;line-height:14px;font-size:11px;text-align:right;color:#000;">10</div>
<div class="a" style="left:576px;top:552px;width:3px;height:1px;background:#000;"></div>
<div class="a t" style="left:531.00px;top:571.30px;width:40px;line-height:14px;font-size:11px;text-align:right;color:#000;">0</div>
<div class="a" style="left:576px;top:578px;width:3px;height:1px;background:#000;"></div>
<div class="a t" style="left:531.00px;top:596.90px;width:40px;line-height:14px;font-size:11px;text-align:right;color:#000;">-10</div>
<div class="a" style="left:576px;top:603px;width:3px;height:1px;background:#000;"></div>
<div class="a t" style="left:531.00px;top:622.50px;width:40px;line-height:14px;font-size:11px;text-align:right;color:#000;">-20</div>
<div class="a" style="left:576px;top:629px;width:3px;height:1px;background:#000;"></div>
<div class="a t" style="left:531.00px;top:648.10px;width:40px;line-height:14px;font-size:11px;text-align:right;color:#000;">-30</div>
<div class="a" style="left:576px;top:655px;width:3px;height:1px;background:#000;"></div>
<div class="a t" style="left:531.00px;top:673.70px;width:40px;line-height:14px;font-size:11px;text-align:right;color:#000;">-40</div>
<div class="a" style="left:576px;top:680px;width:3px;height:1px;background:#000;"></div>
<div class="a t" style="left:531.00px;top:699.30px;width:40px;line-height:14px;font-size:11px;text-align:right;color:#000;">-50</div>
<div class="a" style="left:576px;top:706px;width:3px;height:1px;background:#000;"></div>
<div class="a t" style="left:531.00px;top:724.90px;width:40px;line-height:14px;font-size:11px;text-align:right;color:#000;">-60</div>
<div class="a" style="left:576px;top:731px;width:3px;height:1px;background:#000;"></div>
<div class="a" style="left:602px;top:489px;width:69px;height:41px;border:1px solid #b3b3b3;box-sizing:border-box;"></div>
<div class="a" style="left:602px;top:529px;width:69px;height:17px;border:1px solid #b3b3b3;box-sizing:border-box;"></div>
<div class="a" style="left:602px;top:545px;width:69px;height:194px;border:1px solid #b3b3b3;box-sizing:border-box;"></div>
<div class="a t" style="left:536.00px;top:502.70px;width:200px;line-height:14px;font-size:12px;text-align:center;color:#000;transform:scaleX(0.917);transform-origin:50% 0;">currentGain</div>
<div class="a t" style="left:536.00px;top:515.70px;width:200px;line-height:14px;font-size:12px;text-align:center;color:#000;transform:scaleX(0.917);transform-origin:50% 0;">(dB)</div>
<div class="a t" style="left:536.00px;top:530.00px;width:200px;line-height:14px;font-size:11px;text-align:center;color:#000;">0.00</div>
<div class="a" style="left:647px;top:551px;width:16px;height:180px;background:#2f5e30;border:1px solid #4d4d4d;box-sizing:border-box;"></div>
<div class="a" style="left:647px;top:551px;width:16px;height:10px;background:#5e3231;border-bottom:1px solid #555;box-sizing:border-box;"></div>
<div class="a" style="left:647px;top:561px;width:16px;height:25px;background:#5a5f32;border-bottom:1px solid #555;box-sizing:border-box;"></div>
<div class="a t" style="left:599.00px;top:545.70px;width:40px;line-height:14px;font-size:11px;text-align:right;color:#000;">10</div>
<div class="a" style="left:644px;top:552px;width:3px;height:1px;background:#000;"></div>
<div class="a t" style="left:599.00px;top:571.30px;width:40px;line-height:14px;font-size:11px;text-align:right;color:#000;">0</div>
<div class="a" style="left:644px;top:578px;width:3px;height:1px;background:#000;"></div>
<div class="a t" style="left:599.00px;top:596.90px;width:40px;line-height:14px;font-size:11px;text-align:right;color:#000;">-10</div>
<div class="a" style="left:644px;top:603px;width:3px;height:1px;background:#000;"></div>
<div class="a t" style="left:599.00px;top:622.50px;width:40px;line-height:14px;font-size:11px;text-align:right;color:#000;">-20</div>
<div class="a" style="left:644px;top:629px;width:3px;height:1px;background:#000;"></div>
<div class="a t" style="left:599.00px;top:648.10px;width:40px;line-height:14px;font-size:11px;text-align:right;color:#000;">-30</div>
<div class="a" style="left:644px;top:655px;width:3px;height:1px;background:#000;"></div>
<div class="a t" style="left:599.00px;top:673.70px;width:40px;line-height:14px;font-size:11px;text-align:right;color:#000;">-40</div>
<div class="a" style="left:644px;top:680px;width:3px;height:1px;background:#000;"></div>
<div class="a t" style="left:599.00px;top:699.30px;width:40px;line-height:14px;font-size:11px;text-align:right;color:#000;">-50</div>
<div class="a" style="left:644px;top:706px;width:3px;height:1px;background:#000;"></div>
<div class="a t" style="left:599.00px;top:724.90px;width:40px;line-height:14px;font-size:11px;text-align:right;color:#000;">-60</div>
<div class="a" style="left:644px;top:731px;width:3px;height:1px;background:#000;"></div>
<div class="a" style="left:465px;top:738px;width:69px;height:41px;border:1px solid #b3b3b3;box-sizing:border-box;"></div>
<div class="a" style="left:465px;top:778px;width:69px;height:17px;border:1px solid #b3b3b3;box-sizing:border-box;"></div>
<div class="a" style="left:465px;top:794px;width:69px;height:70px;border:1px solid #b3b3b3;box-sizing:border-box;"></div>
<div class="a t" style="left:399.00px;top:751.70px;width:200px;line-height:14px;font-size:12px;text-align:center;color:#000;transform:scaleX(0.917);transform-origin:50% 0;">gain</div>
<div class="a t" style="left:399.00px;top:764.70px;width:200px;line-height:14px;font-size:12px;text-align:center;color:#000;transform:scaleX(0.917);transform-origin:50% 0;">(dB)</div>
<div class="a t" style="left:399.00px;top:779.00px;width:200px;line-height:14px;font-size:11px;text-align:center;color:#000;">0</div>
<svg class="a" style="left:462.00px;top:792.20px" width="75" height="75" viewBox="0 0 75 75"><circle cx="8.29" cy="49.30" r="2.10" fill="#708a96"/><circle cx="6.17" cy="34.21" r="2.10" fill="#708a96"/><circle cx="11.39" cy="19.89" r="2.10" fill="#708a96"/><circle cx="22.71" cy="9.69" r="2.10" fill="#708a96"/><circle cx="37.50" cy="6.00" r="2.10" fill="#708a96"/><circle cx="52.29" cy="9.69" r="2.10" fill="#708a96"/><circle cx="63.61" cy="19.89" r="2.10" fill="#708a96"/><circle cx="68.83" cy="34.21" r="2.10" fill="#708a96"/><circle cx="66.71" cy="49.30" r="2.10" fill="#708a96"/><circle cx="37.5" cy="37.5" r="24" fill="#263238"/><circle cx="37.5" cy="37.5" r="21.24" fill="#8d8e8f"/><circle cx="37.5" cy="37.5" r="18.96" fill="#c1c2c3"/><path d="M24.09 50.91A18.96 18.96 0 0 1 50.91 24.09Z" fill="#d3d4d6"/><circle cx="37.50" cy="24.30" r="2.64" fill="#ff3c00"/></svg>
<div class="a t" style="left:468.00px;top:847.50px;width:30px;line-height:14px;font-size:11px;text-align:left;color:#000;">-24</div>
<div class="a t" style="left:501.00px;top:847.50px;width:30px;line-height:14px;font-size:11px;text-align:right;color:#000;">24</div>
<div class="a" style="left:534px;top:738px;width:69px;height:41px;border:1px solid #b3b3b3;box-sizing:border-box;"></div>
<div class="a" style="left:534px;top:778px;width:69px;height:17px;border:1px solid #b3b3b3;box-sizing:border-box;"></div>
<div class="a t" style="left:468.00px;top:751.70px;width:200px;line-height:14px;font-size:12px;text-align:center;color:#000;transform:scaleX(0.917);transform-origin:50% 0;">ratio</div>
<div class="a t" style="left:468.00px;top:779.00px;width:200px;line-height:14px;font-size:11px;text-align:center;color:#000;">10</div>
<div class="a" style="left:602px;top:738px;width:69px;height:41px;border:1px solid #b3b3b3;box-sizing:border-box;"></div>
<div class="a" style="left:602px;top:778px;width:69px;height:17px;border:1px solid #b3b3b3;box-sizing:border-box;"></div>
<div class="a t" style="left:536.00px;top:751.70px;width:200px;line-height:14px;font-size:12px;text-align:center;color:#000;transform:scaleX(0.917);transform-origin:50% 0;">attackTime</div>
<div class="a t" style="left:536.00px;top:764.70px;width:200px;line-height:14px;font-size:12px;text-align:center;color:#000;transform:scaleX(0.917);transform-origin:50% 0;">(msec)</div>
<div class="a t" style="left:536.00px;top:779.00px;width:200px;line-height:14px;font-size:11px;text-align:center;color:#000;">2</div>
<div class="a" style="left:534px;top:797px;width:69px;height:41px;border:1px solid #b3b3b3;box-sizing:border-box;"></div>
<div class="a" style="left:534px;top:837px;width:69px;height:17px;border:1px solid #b3b3b3;box-sizing:border-box;"></div>
<div class="a t" style="left:468.00px;top:810.70px;width:200px;line-height:14px;font-size:12px;text-align:center;color:#000;transform:scaleX(0.917);transform-origin:50% 0;">kneeDepth</div>
<div class="a t" style="left:468.00px;top:823.70px;width:200px;line-height:14px;font-size:12px;text-align:center;color:#000;transform:scaleX(0.917);transform-origin:50% 0;">(dB)</div>
<div class="a t" style="left:468.00px;top:838.00px;width:200px;line-height:14px;font-size:11px;text-align:center;color:#000;">2</div>
<div class="a" style="left:602px;top:797px;width:69px;height:41px;border:1px solid #b3b3b3;box-sizing:border-box;"></div>
<div class="a" style="left:602px;top:837px;width:69px;height:17px;border:1px solid #b3b3b3;box-sizing:border-box;"></div>
<div class="a t" style="left:536.00px;top:810.70px;width:200px;line-height:14px;font-size:12px;text-align:center;color:#000;transform:scaleX(0.917);transform-origin:50% 0;">decayTime</div>
<div class="a t" style="left:536.00px;top:823.70px;width:200px;line-height:14px;font-size:12px;text-align:center;color:#000;transform:scaleX(0.917);transform-origin:50% 0;">(msec)</div>
<div class="a t" style="left:536.00px;top:838.00px;width:200px;line-height:14px;font-size:11px;text-align:center;color:#000;">50</div>
<div class="a t" style="left:586.80px;width:400px;text-align:center;top:452.07px;line-height:30px;font-size:20px;transform:scaleX(0.95);transform-origin:50% 0;">DRC (&gt; 4000 Hz)</div>
<div class="a" style="left:678px;top:489px;width:69px;height:41px;border:1px solid #b3b3b3;box-sizing:border-box;"></div>
<div class="a" style="left:678px;top:529px;width:69px;height:17px;border:1px solid #b3b3b3;box-sizing:border-box;"></div>
<div class="a" style="left:678px;top:545px;width:69px;height:194px;border:1px solid #b3b3b3;box-sizing:border-box;"></div>
<div class="a t" style="left:612.00px;top:502.70px;width:200px;line-height:14px;font-size:12px;text-align:center;color:#000;transform:scaleX(0.917);transform-origin:50% 0;">threshold</div>
<div class="a t" style="left:612.00px;top:515.70px;width:200px;line-height:14px;font-size:12px;text-align:center;color:#000;transform:scaleX(0.917);transform-origin:50% 0;">(dB)</div>
<div class="a t" style="left:612.00px;top:530.00px;width:200px;line-height:14px;font-size:11px;text-align:center;color:#000;">-48</div>
<div class="a" style="left:726px;top:552px;width:3px;height:180.5px;background:linear-gradient(to right,#b8b8b8,#7a7a7a 50%,#b8b8b8);"></div>
<div class="a t" style="left:672.50px;top:554.20px;width:40px;line-height:14px;font-size:11px;text-align:right;color:#000;">0</div>
<div class="a" style="left:718px;top:561px;width:2px;height:1px;background:#000;"></div>
<div class="a" style="left:735px;top:561px;width:2px;height:1px;background:#000;"></div>
<div class="a t" style="left:672.50px;top:567.58px;width:40px;line-height:14px;font-size:11px;text-align:right;color:#000;">-5</div>
<div class="a" style="left:718px;top:574px;width:2px;height:1px;background:#000;"></div>
<div class="a" style="left:735px;top:574px;width:2px;height:1px;background:#000;"></div>
<div class="a t" style="left:672.50px;top:580.95px;width:40px;line-height:14px;font-size:11px;text-align:right;color:#000;">-10</div>
<div class="a" style="left:718px;top:587px;width:2px;height:1px;background:#000;"></div>
<div class="a" style="left:735px;top:587px;width:2px;height:1px;background:#000;"></div>
<div class="a t" style="left:672.50px;top:594.33px;width:40px;line-height:14px;font-size:11px;text-align:right;color:#000;">-15</div>
<div class="a" style="left:718px;top:601px;width:2px;height:1px;background:#000;"></div>
<div class="a" style="left:735px;top:601px;width:2px;height:1px;background:#000;"></div>
<div class="a t" style="left:672.50px;top:607.70px;width:40px;line-height:14px;font-size:11px;text-align:right;color:#000;">-20</div>
<div class="a" style="left:718px;top:614px;width:2px;height:1px;background:#000;"></div>
<div class="a" style="left:735px;top:614px;width:2px;height:1px;background:#000;"></div>
<div class="a t" style="left:672.50px;top:621.08px;width:40px;line-height:14px;font-size:11px;text-align:right;color:#000;">-25</div>
<div class="a" style="left:718px;top:628px;width:2px;height:1px;background:#000;"></div>
<div class="a" style="left:735px;top:628px;width:2px;height:1px;background:#000;"></div>
<div class="a t" style="left:672.50px;top:634.45px;width:40px;line-height:14px;font-size:11px;text-align:right;color:#000;">-30</div>
<div class="a" style="left:718px;top:641px;width:2px;height:1px;background:#000;"></div>
<div class="a" style="left:735px;top:641px;width:2px;height:1px;background:#000;"></div>
<div class="a t" style="left:672.50px;top:647.83px;width:40px;line-height:14px;font-size:11px;text-align:right;color:#000;">-35</div>
<div class="a" style="left:718px;top:654px;width:2px;height:1px;background:#000;"></div>
<div class="a" style="left:735px;top:654px;width:2px;height:1px;background:#000;"></div>
<div class="a t" style="left:672.50px;top:661.20px;width:40px;line-height:14px;font-size:11px;text-align:right;color:#000;">-40</div>
<div class="a" style="left:718px;top:668px;width:2px;height:1px;background:#000;"></div>
<div class="a" style="left:735px;top:668px;width:2px;height:1px;background:#000;"></div>
<div class="a t" style="left:672.50px;top:674.58px;width:40px;line-height:14px;font-size:11px;text-align:right;color:#000;">-45</div>
<div class="a" style="left:718px;top:681px;width:2px;height:1px;background:#000;"></div>
<div class="a" style="left:735px;top:681px;width:2px;height:1px;background:#000;"></div>
<div class="a t" style="left:672.50px;top:687.95px;width:40px;line-height:14px;font-size:11px;text-align:right;color:#000;">-50</div>
<div class="a" style="left:718px;top:694px;width:2px;height:1px;background:#000;"></div>
<div class="a" style="left:735px;top:694px;width:2px;height:1px;background:#000;"></div>
<div class="a t" style="left:672.50px;top:701.33px;width:40px;line-height:14px;font-size:11px;text-align:right;color:#000;">-55</div>
<div class="a" style="left:718px;top:708px;width:2px;height:1px;background:#000;"></div>
<div class="a" style="left:735px;top:708px;width:2px;height:1px;background:#000;"></div>
<div class="a t" style="left:672.50px;top:714.70px;width:40px;line-height:14px;font-size:11px;text-align:right;color:#000;">-60</div>
<div class="a" style="left:718px;top:721px;width:2px;height:1px;background:#000;"></div>
<div class="a" style="left:735px;top:721px;width:2px;height:1px;background:#000;"></div>
<div class="a" style="left:721px;top:680px;width:12px;height:21px;background:#f3f3f3;"></div>
<svg class="a" style="left:722px;top:682px" width="10" height="17" viewBox="0 0 10 17"><rect x="0" y="0" width="10" height="17" fill="#5a4038"/><rect x="1" y="1" width="8" height="15" fill="#ff4500"/><rect x="1" y="1" width="8" height="2" fill="#ff7f58"/><rect x="1" y="3" width="8" height="5" fill="#ff4400"/><rect x="1" y="8" width="8" height="1" fill="#ffa48a"/><rect x="1" y="9" width="8" height="3" fill="#ff5c2a"/><rect x="1" y="12" width="8" height="2" fill="#ff8a66"/><rect x="1" y="14" width="8" height="2" fill="#ff4000"/><rect x="0" y="0" width="10" height="1" fill="#2f3b42"/><rect x="0" y="16" width="10" height="1" fill="#2f3b42"/></svg>
<div class="a" style="left:746px;top:489px;width:68px;height:41px;border:1px solid #b3b3b3;box-sizing:border-box;"></div>
<div class="a" style="left:746px;top:529px;width:68px;height:17px;border:1px solid #b3b3b3;box-sizing:border-box;"></div>
<div class="a" style="left:746px;top:545px;width:68px;height:194px;border:1px solid #b3b3b3;box-sizing:border-box;"></div>
<div class="a t" style="left:679.50px;top:502.70px;width:200px;line-height:14px;font-size:12px;text-align:center;color:#000;transform:scaleX(0.917);transform-origin:50% 0;">envState</div>
<div class="a t" style="left:679.50px;top:515.70px;width:200px;line-height:14px;font-size:12px;text-align:center;color:#000;transform:scaleX(0.917);transform-origin:50% 0;">(dB)</div>
<div class="a t" style="left:679.50px;top:530.00px;width:200px;line-height:14px;font-size:11px;text-align:center;color:#000;">0.00</div>
<div class="a" style="left:791px;top:551px;width:16px;height:180px;background:#2f5e30;border:1px solid #4d4d4d;box-sizing:border-box;"></div>
<div class="a" style="left:791px;top:551px;width:16px;height:10px;background:#5e3231;border-bottom:1px solid #555;box-sizing:border-box;"></div>
<div class="a" style="left:791px;top:561px;width:16px;height:25px;background:#5a5f32;border-bottom:1px solid #555;box-sizing:border-box;"></div>
<div class="a t" style="left:743.00px;top:545.70px;width:40px;line-height:14px;font-size:11px;text-align:right;color:#000;">10</div>
<div class="a" style="left:788px;top:552px;width:3px;height:1px;background:#000;"></div>
<div class="a t" style="left:743.00px;top:571.30px;width:40px;line-height:14px;font-size:11px;text-align:right;color:#000;">0</div>
<div class="a" style="left:788px;top:578px;width:3px;height:1px;background:#000;"></div>
<div class="a t" style="left:743.00px;top:596.90px;width:40px;line-height:14px;font-size:11px;text-align:right;color:#000;">-10</div>
<div class="a" style="left:788px;top:603px;width:3px;height:1px;background:#000;"></div>
<div class="a t" style="left:743.00px;top:622.50px;width:40px;line-height:14px;font-size:11px;text-align:right;color:#000;">-20</div>
<div class="a" style="left:788px;top:629px;width:3px;height:1px;background:#000;"></div>
<div class="a t" style="left:743.00px;top:648.10px;width:40px;line-height:14px;font-size:11px;text-align:right;color:#000;">-30</div>
<div class="a" style="left:788px;top:655px;width:3px;height:1px;background:#000;"></div>
<div class="a t" style="left:743.00px;top:673.70px;width:40px;line-height:14px;font-size:11px;text-align:right;color:#000;">-40</div>
<div class="a" style="left:788px;top:680px;width:3px;height:1px;background:#000;"></div>
<div class="a t" style="left:743.00px;top:699.30px;width:40px;line-height:14px;font-size:11px;text-align:right;color:#000;">-50</div>
<div class="a" style="left:788px;top:706px;width:3px;height:1px;background:#000;"></div>
<div class="a t" style="left:743.00px;top:724.90px;width:40px;line-height:14px;font-size:11px;text-align:right;color:#000;">-60</div>
<div class="a" style="left:788px;top:731px;width:3px;height:1px;background:#000;"></div>
<div class="a" style="left:814px;top:489px;width:69px;height:41px;border:1px solid #b3b3b3;box-sizing:border-box;"></div>
<div class="a" style="left:814px;top:529px;width:69px;height:17px;border:1px solid #b3b3b3;box-sizing:border-box;"></div>
<div class="a" style="left:814px;top:545px;width:69px;height:194px;border:1px solid #b3b3b3;box-sizing:border-box;"></div>
<div class="a t" style="left:748.00px;top:502.70px;width:200px;line-height:14px;font-size:12px;text-align:center;color:#000;transform:scaleX(0.917);transform-origin:50% 0;">currentGain</div>
<div class="a t" style="left:748.00px;top:515.70px;width:200px;line-height:14px;font-size:12px;text-align:center;color:#000;transform:scaleX(0.917);transform-origin:50% 0;">(dB)</div>
<div class="a t" style="left:748.00px;top:530.00px;width:200px;line-height:14px;font-size:11px;text-align:center;color:#000;">0.00</div>
<div class="a" style="left:859px;top:551px;width:16px;height:180px;background:#2f5e30;border:1px solid #4d4d4d;box-sizing:border-box;"></div>
<div class="a" style="left:859px;top:551px;width:16px;height:10px;background:#5e3231;border-bottom:1px solid #555;box-sizing:border-box;"></div>
<div class="a" style="left:859px;top:561px;width:16px;height:25px;background:#5a5f32;border-bottom:1px solid #555;box-sizing:border-box;"></div>
<div class="a t" style="left:811.00px;top:545.70px;width:40px;line-height:14px;font-size:11px;text-align:right;color:#000;">10</div>
<div class="a" style="left:856px;top:552px;width:3px;height:1px;background:#000;"></div>
<div class="a t" style="left:811.00px;top:571.30px;width:40px;line-height:14px;font-size:11px;text-align:right;color:#000;">0</div>
<div class="a" style="left:856px;top:578px;width:3px;height:1px;background:#000;"></div>
<div class="a t" style="left:811.00px;top:596.90px;width:40px;line-height:14px;font-size:11px;text-align:right;color:#000;">-10</div>
<div class="a" style="left:856px;top:603px;width:3px;height:1px;background:#000;"></div>
<div class="a t" style="left:811.00px;top:622.50px;width:40px;line-height:14px;font-size:11px;text-align:right;color:#000;">-20</div>
<div class="a" style="left:856px;top:629px;width:3px;height:1px;background:#000;"></div>
<div class="a t" style="left:811.00px;top:648.10px;width:40px;line-height:14px;font-size:11px;text-align:right;color:#000;">-30</div>
<div class="a" style="left:856px;top:655px;width:3px;height:1px;background:#000;"></div>
<div class="a t" style="left:811.00px;top:673.70px;width:40px;line-height:14px;font-size:11px;text-align:right;color:#000;">-40</div>
<div class="a" style="left:856px;top:680px;width:3px;height:1px;background:#000;"></div>
<div class="a t" style="left:811.00px;top:699.30px;width:40px;line-height:14px;font-size:11px;text-align:right;color:#000;">-50</div>
<div class="a" style="left:856px;top:706px;width:3px;height:1px;background:#000;"></div>
<div class="a t" style="left:811.00px;top:724.90px;width:40px;line-height:14px;font-size:11px;text-align:right;color:#000;">-60</div>
<div class="a" style="left:856px;top:731px;width:3px;height:1px;background:#000;"></div>
<div class="a" style="left:678px;top:738px;width:69px;height:41px;border:1px solid #b3b3b3;box-sizing:border-box;"></div>
<div class="a" style="left:678px;top:778px;width:69px;height:17px;border:1px solid #b3b3b3;box-sizing:border-box;"></div>
<div class="a" style="left:678px;top:794px;width:69px;height:70px;border:1px solid #b3b3b3;box-sizing:border-box;"></div>
<div class="a t" style="left:612.00px;top:751.70px;width:200px;line-height:14px;font-size:12px;text-align:center;color:#000;transform:scaleX(0.917);transform-origin:50% 0;">gain</div>
<div class="a t" style="left:612.00px;top:764.70px;width:200px;line-height:14px;font-size:12px;text-align:center;color:#000;transform:scaleX(0.917);transform-origin:50% 0;">(dB)</div>
<div class="a t" style="left:612.00px;top:779.00px;width:200px;line-height:14px;font-size:11px;text-align:center;color:#000;">0</div>
<svg class="a" style="left:675.00px;top:792.20px" width="75" height="75" viewBox="0 0 75 75"><circle cx="8.29" cy="49.30" r="2.10" fill="#708a96"/><circle cx="6.17" cy="34.21" r="2.10" fill="#708a96"/><circle cx="11.39" cy="19.89" r="2.10" fill="#708a96"/><circle cx="22.71" cy="9.69" r="2.10" fill="#708a96"/><circle cx="37.50" cy="6.00" r="2.10" fill="#708a96"/><circle cx="52.29" cy="9.69" r="2.10" fill="#708a96"/><circle cx="63.61" cy="19.89" r="2.10" fill="#708a96"/><circle cx="68.83" cy="34.21" r="2.10" fill="#708a96"/><circle cx="66.71" cy="49.30" r="2.10" fill="#708a96"/><circle cx="37.5" cy="37.5" r="24" fill="#263238"/><circle cx="37.5" cy="37.5" r="21.24" fill="#8d8e8f"/><circle cx="37.5" cy="37.5" r="18.96" fill="#c1c2c3"/><path d="M24.09 50.91A18.96 18.96 0 0 1 50.91 24.09Z" fill="#d3d4d6"/><circle cx="37.50" cy="24.30" r="2.64" fill="#ff3c00"/></svg>
<div class="a t" style="left:681.00px;top:847.50px;width:30px;line-height:14px;font-size:11px;text-align:left;color:#000;">-24</div>
<div class="a t" style="left:714.00px;top:847.50px;width:30px;line-height:14px;font-size:11px;text-align:right;color:#000;">24</div>
<div class="a" style="left:746px;top:738px;width:68px;height:41px;border:1px solid #b3b3b3;box-sizing:border-box;"></div>
<div class="a" style="left:746px;top:778px;width:68px;height:17px;border:1px solid #b3b3b3;box-sizing:border-box;"></div>
<div class="a t" style="left:679.50px;top:751.70px;width:200px;line-height:14px;font-size:12px;text-align:center;color:#000;transform:scaleX(0.917);transform-origin:50% 0;">ratio</div>
<div class="a t" style="left:679.50px;top:779.00px;width:200px;line-height:14px;font-size:11px;text-align:center;color:#000;">8</div>
<div class="a" style="left:815px;top:738px;width:69px;height:41px;border:1px solid #b3b3b3;box-sizing:border-box;"></div>
<div class="a" style="left:815px;top:778px;width:69px;height:17px;border:1px solid #b3b3b3;box-sizing:border-box;"></div>
<div class="a t" style="left:749.00px;top:751.70px;width:200px;line-height:14px;font-size:12px;text-align:center;color:#000;transform:scaleX(0.917);transform-origin:50% 0;">attackTime</div>
<div class="a t" style="left:749.00px;top:764.70px;width:200px;line-height:14px;font-size:12px;text-align:center;color:#000;transform:scaleX(0.917);transform-origin:50% 0;">(msec)</div>
<div class="a t" style="left:749.00px;top:779.00px;width:200px;line-height:14px;font-size:11px;text-align:center;color:#000;">2</div>
<div class="a" style="left:746px;top:797px;width:68px;height:41px;border:1px solid #b3b3b3;box-sizing:border-box;"></div>
<div class="a" style="left:746px;top:837px;width:68px;height:17px;border:1px solid #b3b3b3;box-sizing:border-box;"></div>
<div class="a t" style="left:679.50px;top:810.70px;width:200px;line-height:14px;font-size:12px;text-align:center;color:#000;transform:scaleX(0.917);transform-origin:50% 0;">kneeDepth</div>
<div class="a t" style="left:679.50px;top:823.70px;width:200px;line-height:14px;font-size:12px;text-align:center;color:#000;transform:scaleX(0.917);transform-origin:50% 0;">(dB)</div>
<div class="a t" style="left:679.50px;top:838.00px;width:200px;line-height:14px;font-size:11px;text-align:center;color:#000;">2</div>
<div class="a" style="left:815px;top:797px;width:69px;height:41px;border:1px solid #b3b3b3;box-sizing:border-box;"></div>
<div class="a" style="left:815px;top:837px;width:69px;height:17px;border:1px solid #b3b3b3;box-sizing:border-box;"></div>
<div class="a t" style="left:749.00px;top:810.70px;width:200px;line-height:14px;font-size:12px;text-align:center;color:#000;transform:scaleX(0.917);transform-origin:50% 0;">decayTime</div>
<div class="a t" style="left:749.00px;top:823.70px;width:200px;line-height:14px;font-size:12px;text-align:center;color:#000;transform:scaleX(0.917);transform-origin:50% 0;">(msec)</div>
<div class="a t" style="left:749.00px;top:838.00px;width:200px;line-height:14px;font-size:11px;text-align:center;color:#000;">50</div>
<div class="a t" style="left:808.20px;width:400px;text-align:center;top:452.07px;line-height:30px;font-size:20px;transform:scaleX(0.93);transform-origin:50% 0;">DRC (Combined)</div>
<div class="a" style="left:907px;top:489px;width:68px;height:41px;border:1px solid #b3b3b3;box-sizing:border-box;"></div>
<div class="a" style="left:907px;top:529px;width:68px;height:17px;border:1px solid #b3b3b3;box-sizing:border-box;"></div>
<div class="a" style="left:907px;top:545px;width:68px;height:194px;border:1px solid #b3b3b3;box-sizing:border-box;"></div>
<div class="a t" style="left:840.50px;top:502.70px;width:200px;line-height:14px;font-size:12px;text-align:center;color:#000;transform:scaleX(0.917);transform-origin:50% 0;">threshold</div>
<div class="a t" style="left:840.50px;top:515.70px;width:200px;line-height:14px;font-size:12px;text-align:center;color:#000;transform:scaleX(0.917);transform-origin:50% 0;">(dB)</div>
<div class="a" style="left:908px;top:530px;width:66px;height:15px;background:#fff;"></div>
<div class="a" style="left:933px;top:530px;width:16px;height:12.5px;background:#0078d7;"></div>
<div class="a t" style="left:911.00px;top:529.50px;width:60px;line-height:14px;font-size:11px;text-align:center;color:#fff;">-26</div>
<div class="a" style="left:955px;top:552px;width:3px;height:180.5px;background:linear-gradient(to right,#b8b8b8,#7a7a7a 50%,#b8b8b8);"></div>
<div class="a t" style="left:901.50px;top:554.20px;width:40px;line-height:14px;font-size:11px;text-align:right;color:#000;">0</div>
<div class="a" style="left:947px;top:561px;width:2px;height:1px;background:#000;"></div>
<div class="a" style="left:964px;top:561px;width:2px;height:1px;background:#000;"></div>
<div class="a t" style="left:901.50px;top:567.58px;width:40px;line-height:14px;font-size:11px;text-align:right;color:#000;">-5</div>
<div class="a" style="left:947px;top:574px;width:2px;height:1px;background:#000;"></div>
<div class="a" style="left:964px;top:574px;width:2px;height:1px;background:#000;"></div>
<div class="a t" style="left:901.50px;top:580.95px;width:40px;line-height:14px;font-size:11px;text-align:right;color:#000;">-10</div>
<div class="a" style="left:947px;top:587px;width:2px;height:1px;background:#000;"></div>
<div class="a" style="left:964px;top:587px;width:2px;height:1px;background:#000;"></div>
<div class="a t" style="left:901.50px;top:594.33px;width:40px;line-height:14px;font-size:11px;text-align:right;color:#000;">-15</div>
<div class="a" style="left:947px;top:601px;width:2px;height:1px;background:#000;"></div>
<div class="a" style="left:964px;top:601px;width:2px;height:1px;background:#000;"></div>
<div class="a t" style="left:901.50px;top:607.70px;width:40px;line-height:14px;font-size:11px;text-align:right;color:#000;">-20</div>
<div class="a" style="left:947px;top:614px;width:2px;height:1px;background:#000;"></div>
<div class="a" style="left:964px;top:614px;width:2px;height:1px;background:#000;"></div>
<div class="a t" style="left:901.50px;top:621.08px;width:40px;line-height:14px;font-size:11px;text-align:right;color:#000;">-25</div>
<div class="a" style="left:947px;top:628px;width:2px;height:1px;background:#000;"></div>
<div class="a" style="left:964px;top:628px;width:2px;height:1px;background:#000;"></div>
<div class="a t" style="left:901.50px;top:634.45px;width:40px;line-height:14px;font-size:11px;text-align:right;color:#000;">-30</div>
<div class="a" style="left:947px;top:641px;width:2px;height:1px;background:#000;"></div>
<div class="a" style="left:964px;top:641px;width:2px;height:1px;background:#000;"></div>
<div class="a t" style="left:901.50px;top:647.83px;width:40px;line-height:14px;font-size:11px;text-align:right;color:#000;">-35</div>
<div class="a" style="left:947px;top:654px;width:2px;height:1px;background:#000;"></div>
<div class="a" style="left:964px;top:654px;width:2px;height:1px;background:#000;"></div>
<div class="a t" style="left:901.50px;top:661.20px;width:40px;line-height:14px;font-size:11px;text-align:right;color:#000;">-40</div>
<div class="a" style="left:947px;top:668px;width:2px;height:1px;background:#000;"></div>
<div class="a" style="left:964px;top:668px;width:2px;height:1px;background:#000;"></div>
<div class="a t" style="left:901.50px;top:674.58px;width:40px;line-height:14px;font-size:11px;text-align:right;color:#000;">-45</div>
<div class="a" style="left:947px;top:681px;width:2px;height:1px;background:#000;"></div>
<div class="a" style="left:964px;top:681px;width:2px;height:1px;background:#000;"></div>
<div class="a t" style="left:901.50px;top:687.95px;width:40px;line-height:14px;font-size:11px;text-align:right;color:#000;">-50</div>
<div class="a" style="left:947px;top:694px;width:2px;height:1px;background:#000;"></div>
<div class="a" style="left:964px;top:694px;width:2px;height:1px;background:#000;"></div>
<div class="a t" style="left:901.50px;top:701.33px;width:40px;line-height:14px;font-size:11px;text-align:right;color:#000;">-55</div>
<div class="a" style="left:947px;top:708px;width:2px;height:1px;background:#000;"></div>
<div class="a" style="left:964px;top:708px;width:2px;height:1px;background:#000;"></div>
<div class="a t" style="left:901.50px;top:714.70px;width:40px;line-height:14px;font-size:11px;text-align:right;color:#000;">-60</div>
<div class="a" style="left:947px;top:721px;width:2px;height:1px;background:#000;"></div>
<div class="a" style="left:964px;top:721px;width:2px;height:1px;background:#000;"></div>
<div class="a" style="left:950px;top:621px;width:12px;height:21px;background:#f3f3f3;"></div>
<svg class="a" style="left:951px;top:623px" width="10" height="17" viewBox="0 0 10 17"><rect x="0" y="0" width="10" height="17" fill="#5a4038"/><rect x="1" y="1" width="8" height="15" fill="#ff4500"/><rect x="1" y="1" width="8" height="2" fill="#ff7f58"/><rect x="1" y="3" width="8" height="5" fill="#ff4400"/><rect x="1" y="8" width="8" height="1" fill="#ffa48a"/><rect x="1" y="9" width="8" height="3" fill="#ff5c2a"/><rect x="1" y="12" width="8" height="2" fill="#ff8a66"/><rect x="1" y="14" width="8" height="2" fill="#ff4000"/><rect x="0" y="0" width="10" height="1" fill="#2f3b42"/><rect x="0" y="16" width="10" height="1" fill="#2f3b42"/></svg>
<div class="a" style="left:975px;top:489px;width:69px;height:41px;border:1px solid #b3b3b3;box-sizing:border-box;"></div>
<div class="a" style="left:975px;top:529px;width:69px;height:17px;border:1px solid #b3b3b3;box-sizing:border-box;"></div>
<div class="a" style="left:975px;top:545px;width:69px;height:194px;border:1px solid #b3b3b3;box-sizing:border-box;"></div>
<div class="a t" style="left:909.00px;top:502.70px;width:200px;line-height:14px;font-size:12px;text-align:center;color:#000;transform:scaleX(0.917);transform-origin:50% 0;">envState</div>
<div class="a t" style="left:909.00px;top:515.70px;width:200px;line-height:14px;font-size:12px;text-align:center;color:#000;transform:scaleX(0.917);transform-origin:50% 0;">(dB)</div>
<div class="a t" style="left:909.00px;top:530.00px;width:200px;line-height:14px;font-size:11px;text-align:center;color:#000;">0.00</div>
<div class="a" style="left:1021px;top:551px;width:16px;height:180px;background:#2f5e30;border:1px solid #4d4d4d;box-sizing:border-box;"></div>
<div class="a" style="left:1021px;top:551px;width:16px;height:10px;background:#5e3231;border-bottom:1px solid #555;box-sizing:border-box;"></div>
<div class="a" style="left:1021px;top:561px;width:16px;height:25px;background:#5a5f32;border-bottom:1px solid #555;box-sizing:border-box;"></div>
<div class="a t" style="left:973.00px;top:545.70px;width:40px;line-height:14px;font-size:11px;text-align:right;color:#000;">10</div>
<div class="a" style="left:1018px;top:552px;width:3px;height:1px;background:#000;"></div>
<div class="a t" style="left:973.00px;top:571.30px;width:40px;line-height:14px;font-size:11px;text-align:right;color:#000;">0</div>
<div class="a" style="left:1018px;top:578px;width:3px;height:1px;background:#000;"></div>
<div class="a t" style="left:973.00px;top:596.90px;width:40px;line-height:14px;font-size:11px;text-align:right;color:#000;">-10</div>
<div class="a" style="left:1018px;top:603px;width:3px;height:1px;background:#000;"></div>
<div class="a t" style="left:973.00px;top:622.50px;width:40px;line-height:14px;font-size:11px;text-align:right;color:#000;">-20</div>
<div class="a" style="left:1018px;top:629px;width:3px;height:1px;background:#000;"></div>
<div class="a t" style="left:973.00px;top:648.10px;width:40px;line-height:14px;font-size:11px;text-align:right;color:#000;">-30</div>
<div class="a" style="left:1018px;top:655px;width:3px;height:1px;background:#000;"></div>
<div class="a t" style="left:973.00px;top:673.70px;width:40px;line-height:14px;font-size:11px;text-align:right;color:#000;">-40</div>
<div class="a" style="left:1018px;top:680px;width:3px;height:1px;background:#000;"></div>
<div class="a t" style="left:973.00px;top:699.30px;width:40px;line-height:14px;font-size:11px;text-align:right;color:#000;">-50</div>
<div class="a" style="left:1018px;top:706px;width:3px;height:1px;background:#000;"></div>
<div class="a t" style="left:973.00px;top:724.90px;width:40px;line-height:14px;font-size:11px;text-align:right;color:#000;">-60</div>
<div class="a" style="left:1018px;top:731px;width:3px;height:1px;background:#000;"></div>
<div class="a" style="left:1044px;top:489px;width:70px;height:41px;border:1px solid #b3b3b3;box-sizing:border-box;"></div>
<div class="a" style="left:1044px;top:529px;width:70px;height:17px;border:1px solid #b3b3b3;box-sizing:border-box;"></div>
<div class="a" style="left:1044px;top:545px;width:70px;height:194px;border:1px solid #b3b3b3;box-sizing:border-box;"></div>
<div class="a t" style="left:978.50px;top:502.70px;width:200px;line-height:14px;font-size:12px;text-align:center;color:#000;transform:scaleX(0.917);transform-origin:50% 0;">currentGain</div>
<div class="a t" style="left:978.50px;top:515.70px;width:200px;line-height:14px;font-size:12px;text-align:center;color:#000;transform:scaleX(0.917);transform-origin:50% 0;">(dB)</div>
<div class="a t" style="left:978.50px;top:530.00px;width:200px;line-height:14px;font-size:11px;text-align:center;color:#000;">0.00</div>
<div class="a" style="left:1090px;top:551px;width:16px;height:180px;background:#2f5e30;border:1px solid #4d4d4d;box-sizing:border-box;"></div>
<div class="a" style="left:1090px;top:551px;width:16px;height:10px;background:#5e3231;border-bottom:1px solid #555;box-sizing:border-box;"></div>
<div class="a" style="left:1090px;top:561px;width:16px;height:25px;background:#5a5f32;border-bottom:1px solid #555;box-sizing:border-box;"></div>
<div class="a t" style="left:1042.00px;top:545.70px;width:40px;line-height:14px;font-size:11px;text-align:right;color:#000;">10</div>
<div class="a" style="left:1087px;top:552px;width:3px;height:1px;background:#000;"></div>
<div class="a t" style="left:1042.00px;top:571.30px;width:40px;line-height:14px;font-size:11px;text-align:right;color:#000;">0</div>
<div class="a" style="left:1087px;top:578px;width:3px;height:1px;background:#000;"></div>
<div class="a t" style="left:1042.00px;top:596.90px;width:40px;line-height:14px;font-size:11px;text-align:right;color:#000;">-10</div>
<div class="a" style="left:1087px;top:603px;width:3px;height:1px;background:#000;"></div>
<div class="a t" style="left:1042.00px;top:622.50px;width:40px;line-height:14px;font-size:11px;text-align:right;color:#000;">-20</div>
<div class="a" style="left:1087px;top:629px;width:3px;height:1px;background:#000;"></div>
<div class="a t" style="left:1042.00px;top:648.10px;width:40px;line-height:14px;font-size:11px;text-align:right;color:#000;">-30</div>
<div class="a" style="left:1087px;top:655px;width:3px;height:1px;background:#000;"></div>
<div class="a t" style="left:1042.00px;top:673.70px;width:40px;line-height:14px;font-size:11px;text-align:right;color:#000;">-40</div>
<div class="a" style="left:1087px;top:680px;width:3px;height:1px;background:#000;"></div>
<div class="a t" style="left:1042.00px;top:699.30px;width:40px;line-height:14px;font-size:11px;text-align:right;color:#000;">-50</div>
<div class="a" style="left:1087px;top:706px;width:3px;height:1px;background:#000;"></div>
<div class="a t" style="left:1042.00px;top:724.90px;width:40px;line-height:14px;font-size:11px;text-align:right;color:#000;">-60</div>
<div class="a" style="left:1087px;top:731px;width:3px;height:1px;background:#000;"></div>
<div class="a" style="left:907px;top:738px;width:68px;height:41px;border:1px solid #b3b3b3;box-sizing:border-box;"></div>
<div class="a" style="left:907px;top:778px;width:68px;height:17px;border:1px solid #b3b3b3;box-sizing:border-box;"></div>
<div class="a" style="left:907px;top:794px;width:68px;height:70px;border:1px solid #b3b3b3;box-sizing:border-box;"></div>
<div class="a t" style="left:840.50px;top:751.70px;width:200px;line-height:14px;font-size:12px;text-align:center;color:#000;transform:scaleX(0.917);transform-origin:50% 0;">gain</div>
<div class="a t" style="left:840.50px;top:764.70px;width:200px;line-height:14px;font-size:12px;text-align:center;color:#000;transform:scaleX(0.917);transform-origin:50% 0;">(dB)</div>
<div class="a t" style="left:840.50px;top:779.00px;width:200px;line-height:14px;font-size:11px;text-align:center;color:#000;">0</div>
<svg class="a" style="left:904.00px;top:792.20px" width="75" height="75" viewBox="0 0 75 75"><circle cx="8.29" cy="49.30" r="2.10" fill="#708a96"/><circle cx="6.17" cy="34.21" r="2.10" fill="#708a96"/><circle cx="11.39" cy="19.89" r="2.10" fill="#708a96"/><circle cx="22.71" cy="9.69" r="2.10" fill="#708a96"/><circle cx="37.50" cy="6.00" r="2.10" fill="#708a96"/><circle cx="52.29" cy="9.69" r="2.10" fill="#708a96"/><circle cx="63.61" cy="19.89" r="2.10" fill="#708a96"/><circle cx="68.83" cy="34.21" r="2.10" fill="#708a96"/><circle cx="66.71" cy="49.30" r="2.10" fill="#708a96"/><circle cx="37.5" cy="37.5" r="24" fill="#263238"/><circle cx="37.5" cy="37.5" r="21.24" fill="#8d8e8f"/><circle cx="37.5" cy="37.5" r="18.96" fill="#c1c2c3"/><path d="M24.09 50.91A18.96 18.96 0 0 1 50.91 24.09Z" fill="#d3d4d6"/><circle cx="37.50" cy="24.30" r="2.64" fill="#ff3c00"/></svg>
<div class="a t" style="left:910.00px;top:847.50px;width:30px;line-height:14px;font-size:11px;text-align:left;color:#000;">-24</div>
<div class="a t" style="left:942.00px;top:847.50px;width:30px;line-height:14px;font-size:11px;text-align:right;color:#000;">24</div>
<div class="a" style="left:975px;top:738px;width:69px;height:41px;border:1px solid #b3b3b3;box-sizing:border-box;"></div>
<div class="a" style="left:975px;top:778px;width:69px;height:17px;border:1px solid #b3b3b3;box-sizing:border-box;"></div>
<div class="a t" style="left:909.00px;top:751.70px;width:200px;line-height:14px;font-size:12px;text-align:center;color:#000;transform:scaleX(0.917);transform-origin:50% 0;">ratio</div>
<div class="a t" style="left:909.00px;top:779.00px;width:200px;line-height:14px;font-size:11px;text-align:center;color:#000;">10</div>
<div class="a" style="left:1044px;top:738px;width:70px;height:41px;border:1px solid #b3b3b3;box-sizing:border-box;"></div>
<div class="a" style="left:1044px;top:778px;width:70px;height:17px;border:1px solid #b3b3b3;box-sizing:border-box;"></div>
<div class="a t" style="left:978.50px;top:751.70px;width:200px;line-height:14px;font-size:12px;text-align:center;color:#000;transform:scaleX(0.917);transform-origin:50% 0;">attackTime</div>
<div class="a t" style="left:978.50px;top:764.70px;width:200px;line-height:14px;font-size:12px;text-align:center;color:#000;transform:scaleX(0.917);transform-origin:50% 0;">(msec)</div>
<div class="a t" style="left:978.50px;top:779.00px;width:200px;line-height:14px;font-size:11px;text-align:center;color:#000;">1</div>
<div class="a" style="left:975px;top:797px;width:69px;height:41px;border:1px solid #b3b3b3;box-sizing:border-box;"></div>
<div class="a" style="left:975px;top:837px;width:69px;height:17px;border:1px solid #b3b3b3;box-sizing:border-box;"></div>
<div class="a t" style="left:909.00px;top:810.70px;width:200px;line-height:14px;font-size:12px;text-align:center;color:#000;transform:scaleX(0.917);transform-origin:50% 0;">kneeDepth</div>
<div class="a t" style="left:909.00px;top:823.70px;width:200px;line-height:14px;font-size:12px;text-align:center;color:#000;transform:scaleX(0.917);transform-origin:50% 0;">(dB)</div>
<div class="a t" style="left:909.00px;top:838.00px;width:200px;line-height:14px;font-size:11px;text-align:center;color:#000;">2</div>
<div class="a" style="left:1044px;top:797px;width:70px;height:41px;border:1px solid #b3b3b3;box-sizing:border-box;"></div>
<div class="a" style="left:1044px;top:837px;width:70px;height:17px;border:1px solid #b3b3b3;box-sizing:border-box;"></div>
<div class="a t" style="left:978.50px;top:810.70px;width:200px;line-height:14px;font-size:12px;text-align:center;color:#000;transform:scaleX(0.917);transform-origin:50% 0;">decayTime</div>
<div class="a t" style="left:978.50px;top:823.70px;width:200px;line-height:14px;font-size:12px;text-align:center;color:#000;transform:scaleX(0.917);transform-origin:50% 0;">(msec)</div>
<div class="a t" style="left:978.50px;top:838.00px;width:200px;line-height:14px;font-size:11px;text-align:center;color:#000;">50</div>
</body></html>
